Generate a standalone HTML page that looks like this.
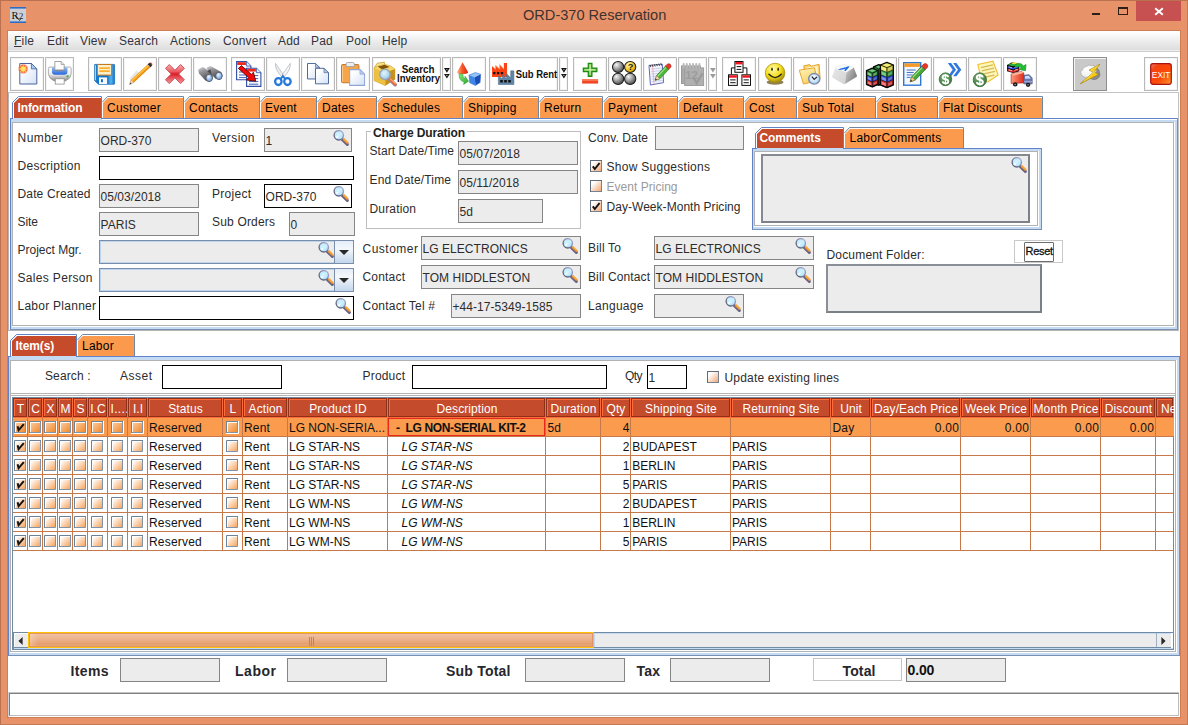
<!DOCTYPE html>
<html><head><meta charset="utf-8"><title>ORD-370 Reservation</title>
<style>
html,body{margin:0;padding:0}
body{width:1188px;height:725px;position:relative;overflow:hidden;background:#e8926a;font-family:"Liberation Sans",sans-serif;font-size:12px;color:#333}
div,svg,span{position:absolute;box-sizing:border-box}
span.i{position:static}
</style></head><body>
<div style="left:0px;top:0px;width:1188px;height:725px;border:1px solid #b9714f;border-right-color:#c47a55;border-bottom-color:#c47a55;"></div>
<div style="left:523px;top:7.27px;font-size:14.6px;line-height:16.6px;color:#3f3330;white-space:nowrap;letter-spacing:-0.015px;">ORD-370 Reservation</div>
<svg style="left:10px;top:7px" width="16" height="16" viewBox="0 0 16 16"><rect width="16" height="16" fill="#ccd0d6"/><rect width="16" height="1.6" fill="#2a6cc6"/><rect y="14.4" width="16" height="1.6" fill="#2a6cc6"/><text x="1.4" y="11.6" font-family="Liberation Serif" font-size="10.5" fill="#151515">R</text><text x="9" y="11.6" font-family="Liberation Serif" font-size="8.6" fill="#151515">2</text><path d="M5.2 8.2 L9.6 13.4 L10.6 12.2" stroke="#151515" stroke-width="0.9" fill="none"/></svg>
<div style="left:1092px;top:13px;width:8px;height:2px;background:#2b2019;"></div>
<div style="left:1118px;top:7px;width:10px;height:8px;border:1px solid #2b2019;border-top-width:2px;"></div>
<div style="left:1136px;top:1px;width:45px;height:20px;background:#c75050;"></div>
<svg style="left:1154px;top:7px" width="10" height="9" viewBox="0 0 10 9"><path d="M1.2 1.3 L8.8 7.8 M8.8 1.3 L1.2 7.8" stroke="#fff" stroke-width="1.9" fill="none"/></svg>
<div style="left:7px;top:30px;width:1174px;height:688px;background:#cf7d55;"></div>
<div style="left:8px;top:31px;width:1172px;height:686px;background:#fff;"></div>
<div style="left:8px;top:31px;width:1172px;height:19px;background:linear-gradient(#ffffff,#fbfbfb 15%,#ececec 55%,#dedede);"></div>
<div style="left:8px;top:50px;width:1172px;height:1px;background:#eeeeee;"></div>
<div style="left:8px;top:51px;width:1172px;height:1px;background:#cdcdcd;"></div>
<div style="left:14px;top:33.53px;font-size:12px;line-height:14px;color:#33333d;white-space:nowrap;letter-spacing:0.2px;"><u>F</u>ile</div>
<div style="left:47px;top:33.53px;font-size:12px;line-height:14px;color:#33333d;white-space:nowrap;letter-spacing:0.2px;">Edit</div>
<div style="left:80px;top:33.53px;font-size:12px;line-height:14px;color:#33333d;white-space:nowrap;letter-spacing:0.2px;">View</div>
<div style="left:119px;top:33.53px;font-size:12px;line-height:14px;color:#33333d;white-space:nowrap;letter-spacing:0.2px;">Search</div>
<div style="left:170px;top:33.53px;font-size:12px;line-height:14px;color:#33333d;white-space:nowrap;letter-spacing:0.2px;">Actions</div>
<div style="left:223px;top:33.53px;font-size:12px;line-height:14px;color:#33333d;white-space:nowrap;letter-spacing:0.2px;">Convert</div>
<div style="left:278px;top:33.53px;font-size:12px;line-height:14px;color:#33333d;white-space:nowrap;letter-spacing:0.2px;">Add</div>
<div style="left:311px;top:33.53px;font-size:12px;line-height:14px;color:#33333d;white-space:nowrap;letter-spacing:0.2px;">Pad</div>
<div style="left:346px;top:33.53px;font-size:12px;line-height:14px;color:#33333d;white-space:nowrap;letter-spacing:0.2px;">Pool</div>
<div style="left:382px;top:33.53px;font-size:12px;line-height:14px;color:#33333d;white-space:nowrap;letter-spacing:0.2px;">Help</div>
<div style="left:8px;top:52px;width:1172px;height:41px;background:#fff;border-bottom:1px solid #c4c4c4;"></div>
<div style="left:10px;top:57px;width:34px;height:34px;background:#fff;border:1px solid #b9b9b9;box-shadow:inset 0 0 0 1px #f4f4f4;"></div>
<svg style="left:17.5px;top:63.1px;overflow:visible" width="19.3" height="21.5" viewBox="0 0 19.30 21.50" preserveAspectRatio="none"><defs><linearGradient id="g1" x1="0" y1="0" x2="1" y2="1"><stop offset="0.2" stop-color="#fff"/><stop offset="1" stop-color="#d3e2f6"/></linearGradient><radialGradient id="g1b"><stop offset="0" stop-color="#fff36a"/><stop offset="0.3" stop-color="#ffc020"/><stop offset="0.62" stop-color="#f6542e"/><stop offset="1" stop-color="#f6542e" stop-opacity="0"/></radialGradient></defs><path d="M1.8 0.5 L13.4 0.5 L18.8 5.9 L18.8 21 L1.8 21 Z" fill="url(#g1)" stroke="#4a6298" stroke-width="1"/><path d="M13.4 0.5 L13.4 5.9 L18.8 5.9 Z" fill="#a9d0f4" stroke="#4a6298" stroke-width="0.8"/><circle cx="5.2" cy="5.9" r="5.4" fill="url(#g1b)"/><path d="M5.2 0.8 L5.9 4.3 L8.8 2.4 L7 5.3 L10.2 6 L7 6.8 L8.6 9.8 L5.9 7.8 L5.1 11 L4.4 7.8 L1.6 9.6 L3.4 6.8 L0.2 5.9 L3.4 5.1 L1.8 2.3 L4.5 4.2 Z" fill="#ffe96a" opacity="0.95"/></svg>
<div style="left:45px;top:57px;width:29px;height:34px;background:#fff;border:1px solid #b9b9b9;box-shadow:inset 0 0 0 1px #f4f4f4;"></div>
<svg style="left:48.2px;top:61.0px;overflow:visible" width="23.6" height="23.6" viewBox="0 0 23.80 23.80" preserveAspectRatio="none"><defs><linearGradient id="g2" x1="0" y1="0" x2="0" y2="1"><stop offset="0" stop-color="#ffffff"/><stop offset="0.5" stop-color="#eeeeee"/><stop offset="1" stop-color="#8a8a8a"/></linearGradient><linearGradient id="g2b" x1="0" y1="0" x2="0" y2="1"><stop offset="0" stop-color="#8cc0fb"/><stop offset="1" stop-color="#2864dc"/></linearGradient></defs><path d="M0.4 7.6 Q0.4 6.1 2 6.1 L21.8 6.1 Q23.4 6.1 23.4 7.6 L23.4 13 Q23.4 17.4 17.4 20.2 L6.4 20.2 Q0.4 17.4 0.4 13 Z" fill="url(#g2)" stroke="#8f8f8f" stroke-width="0.7"/><path d="M4 6.4 L19.6 6.4 L19.6 10.6 Q19.6 13.9 16.5 13.9 L7.1 13.9 Q4 13.9 4 10.6 Z" fill="url(#g2b)"/><rect x="6.6" y="8.6" width="10" height="1.7" fill="#85859a"/><path d="M6.9 0.5 L13.3 0.5 L16.3 3.5 L16.3 9 L6.9 9 Z" fill="#fff" stroke="#8e8e8e" stroke-width="0.8"/><path d="M13.3 0.5 L13.3 3.5 L16.3 3.5" fill="#ececec" stroke="#8e8e8e" stroke-width="0.7"/><circle cx="19.7" cy="15.5" r="1.15" fill="#28b040"/><rect x="7.3" y="17.9" width="9" height="5.4" fill="#fff" stroke="#8e8e8e" stroke-width="0.8"/></svg>
<div style="left:88px;top:57px;width:34px;height:34px;background:#fff;border:1px solid #b9b9b9;box-shadow:inset 0 0 0 1px #f4f4f4;"></div>
<svg style="left:93.9px;top:63.9px;overflow:visible" width="21.0" height="20.7" viewBox="0 0 21.00 20.70" preserveAspectRatio="none"><defs><linearGradient id="g3" x1="0" y1="0" x2="1" y2="0"><stop offset="0" stop-color="#1a7ed0"/><stop offset="0.62" stop-color="#0f6cc4"/><stop offset="0.82" stop-color="#5cb6ee"/><stop offset="0.95" stop-color="#1c84d6"/></linearGradient></defs><path d="M0.5 0.9 Q0.5 0.4 1 0.4 L20 0.4 Q20.6 0.4 20.6 1 L20.6 19.6 Q20.6 20.3 20 20.3 L4.4 20.3 L0.5 16.6 Z" fill="url(#g3)" stroke="#0e62b4" stroke-width="0.7"/><path d="M1.3 1.2 L1.3 16.2" stroke="#cfe8fb" stroke-width="1"/><rect x="3.4" y="0.5" width="14.2" height="10.6" fill="#fdf0c8" stroke="#c07a28" stroke-width="1"/><path d="M5.3 4.1 L15.8 4.1 M5.3 7.2 L15.8 7.2" stroke="#fbb030" stroke-width="1.8"/><rect x="5" y="13.4" width="8.1" height="6.6" fill="#f3f8fd"/><rect x="7" y="15.2" width="1.9" height="3" fill="#1668c8"/></svg>
<div style="left:123px;top:57px;width:34px;height:34px;background:#fff;border:1px solid #b9b9b9;box-shadow:inset 0 0 0 1px #f4f4f4;"></div>
<svg style="left:128.6px;top:62.3px;overflow:visible" width="23.5" height="23.0" viewBox="0 0 23.50 23.00" preserveAspectRatio="none"><path d="M1.6 21.4 L0.8 16.4 L7.4 8.6 L10 10.6 Z" fill="#cfcfcf" opacity="0.5"/><path d="M0.5 22.6 L2 17.8 L4.9 20.6 Z" fill="#f3d3a6" stroke="#b08a5a" stroke-width="0.4"/><path d="M0.5 22.6 L1.2 20.4 L2.6 21.8 Z" fill="#3a3a3a"/><path d="M2 17.8 L18.6 2.4 L21.3 5.2 L4.9 20.6 Z" fill="#f7a21c"/><path d="M2.9 18.6 L19.5 3.3" stroke="#ffd36e" stroke-width="0.9"/><path d="M4.4 20.1 L20.9 4.7" stroke="#d98208" stroke-width="0.8"/><path d="M18.6 2.4 L20 1.1 Q21.6 0.1 22.7 1.3 Q23.7 2.6 22.8 3.9 L21.3 5.2 Z" fill="#2e2e2e"/><path d="M19.6 3.4 L20.4 4.2" stroke="#e8e8e8" stroke-width="0.9"/><path d="M20.7 0.7 Q22.1 0 23 1.2 Q23.6 2.4 23.1 3.5 Q22.3 1.6 20.7 0.7 Z" fill="#f2542c"/></svg>
<div style="left:158px;top:57px;width:34px;height:34px;background:#fff;border:1px solid #b9b9b9;box-shadow:inset 0 0 0 1px #f4f4f4;"></div>
<svg style="left:164.9px;top:63.9px;overflow:visible" width="19.9" height="20.1" viewBox="2.5 2.5 19.00 19.00" preserveAspectRatio="none"><defs><linearGradient id="g4" x1="0" y1="0" x2="0" y2="1"><stop offset="0" stop-color="#f7b0b4"/><stop offset="0.36" stop-color="#ec5c64"/><stop offset="0.5" stop-color="#d81c26"/><stop offset="0.64" stop-color="#e4444c"/><stop offset="1" stop-color="#f29ca2"/></linearGradient></defs><path d="M3 6.6 L6.6 3 L12 8.4 L17.4 3 L21 6.6 L15.6 12 L21 17.4 L17.4 21 L12 15.6 L6.6 21 L3 17.4 L8.4 12 Z" fill="url(#g4)" stroke="#cc4850" stroke-width="0.9" stroke-linejoin="round"/></svg>
<div style="left:193px;top:57px;width:34px;height:34px;background:#fff;border:1px solid #b9b9b9;box-shadow:inset 0 0 0 1px #f4f4f4;"></div>
<svg style="left:197.6px;top:65.9px;overflow:visible" width="24.6" height="15.9" viewBox="0 0 24.60 15.90" preserveAspectRatio="none"><defs><radialGradient id="g5" cx="0.4" cy="0.35"><stop offset="0" stop-color="#eef6ff"/><stop offset="1" stop-color="#7fb0ea"/></radialGradient><linearGradient id="g5b" x1="0" y1="0" x2="0.4" y2="1"><stop offset="0" stop-color="#d0d0d4"/><stop offset="0.4" stop-color="#8e8e92"/><stop offset="1" stop-color="#4a4a4e"/></linearGradient></defs><path d="M8.4 2 L11.6 0.3 Q13 0 14 0.8 L23.2 6 Q24.8 8 24.4 10.6 L22.4 13.4 L17.6 12.8 L10.6 5.6 Z" fill="url(#g5b)"/><path d="M0.4 3.6 L3.8 1.4 Q5 1 6 1.6 L14 8 Q15.2 10 14.8 12.8 L11.4 15.8 L7.4 14.6 L1 7.4 Q0 5.4 0.4 3.6 Z" fill="url(#g5b)"/><path d="M9 5 L13.4 8.6 L12.6 3.4 Z" fill="#4a4a4e"/><path d="M2 3 L5 1.6 M10 1.6 L13 0.6" stroke="#c4c4c8" stroke-width="0.9"/><ellipse cx="11.2" cy="11.9" rx="3.3" ry="3.7" fill="url(#g5)" stroke="#55555a" stroke-width="0.9"/><ellipse cx="20.9" cy="9.9" rx="3.3" ry="3.7" fill="url(#g5)" stroke="#55555a" stroke-width="0.9"/></svg>
<div style="left:231px;top:57px;width:34px;height:34px;background:#fff;border:1px solid #b9b9b9;box-shadow:inset 0 0 0 1px #f4f4f4;"></div>
<svg style="left:235.6px;top:60.9px;overflow:visible" width="25.4" height="25.9" viewBox="0 0 25.40 25.90" preserveAspectRatio="none"><path d="M0.6 0.6 L10.4 0.6 L14.9 5.1 L14.9 18.8 L0.6 18.8 Z" fill="#fff" stroke="#2f4fa8" stroke-width="1.1"/><path d="M10.4 0.6 L10.4 5.1 L14.9 5.1" fill="#e4ecf8" stroke="#2f4fa8" stroke-width="0.8"/><rect x="1.2" y="1.2" width="8.700000000000001" height="2.8" fill="#f02a1a"/><path d="M3.0 8.0 L12.3 8.0 M3.0 11.0 L12.3 11.0 M3.0 14.0 L12.3 14.0 M3.0 16.6 L12.3 16.6" stroke="#3f5fb8" stroke-width="1"/><path d="M10.6 7.2 L20.4 7.2 L24.9 11.7 L24.9 25.4 L10.6 25.4 Z" fill="#fff" stroke="#2f4fa8" stroke-width="1.1"/><path d="M20.4 7.2 L20.4 11.7 L24.9 11.7" fill="#e4ecf8" stroke="#2f4fa8" stroke-width="0.8"/><rect x="11.2" y="7.8" width="8.700000000000001" height="2.8" fill="#f02a1a"/><path d="M13.0 14.600000000000001 L22.299999999999997 14.600000000000001 M13.0 17.6 L22.299999999999997 17.6 M13.0 20.6 L22.299999999999997 20.6 M13.0 23.2 L22.299999999999997 23.2" stroke="#3f5fb8" stroke-width="1"/><path d="M2.4 7.4 L5.4 4.6 L15.4 13.4 L17.4 11.2 L19.8 20.2 L10.4 19 L12.6 16.6 Z" fill="#f00808" stroke="#5a0606" stroke-width="0.9" stroke-linejoin="round"/></svg>
<div style="left:266px;top:57px;width:34px;height:34px;background:#fff;border:1px solid #b9b9b9;box-shadow:inset 0 0 0 1px #f4f4f4;"></div>
<svg style="left:274.3px;top:62.6px;overflow:visible" width="17.8" height="22.5" viewBox="2.6 0.4 18.80 22.80" preserveAspectRatio="none"><path d="M4.2 0.8 Q3.4 7 11 14.6 L12.8 12.6 Q8 6 4.2 0.8 Z" fill="#eceef0" stroke="#a9acb2" stroke-width="0.7"/><path d="M19.8 0.8 Q20.6 7 13 14.6 L11.2 12.6 Q16 6 19.8 0.8 Z" fill="#f6f7f8" stroke="#a9acb2" stroke-width="0.7"/><circle cx="12" cy="13" r="0.9" fill="#8a8a8a"/><ellipse cx="7.2" cy="19.2" rx="3.4" ry="3.5" fill="none" stroke="#2478dc" stroke-width="2.4"/><ellipse cx="16.8" cy="19.2" rx="3.4" ry="3.5" fill="none" stroke="#2478dc" stroke-width="2.4"/><path d="M9.6 16.4 L12 14 L14.4 16.4" fill="none" stroke="#2478dc" stroke-width="2"/></svg>
<div style="left:301px;top:57px;width:34px;height:34px;background:#fff;border:1px solid #b9b9b9;box-shadow:inset 0 0 0 1px #f4f4f4;"></div>
<svg style="left:307.0px;top:63.3px;overflow:visible" width="22.0" height="21.3" viewBox="1 1 22.00 22.00" preserveAspectRatio="none"><defs><linearGradient id="g6" x1="0" y1="0" x2="1" y2="1"><stop offset="0.2" stop-color="#fff"/><stop offset="1" stop-color="#d3e1f5"/></linearGradient></defs><path d="M1.5 1.5 L9.5 1.5 L13.5 5.5 L13.5 17.5 L1.5 17.5 Z" fill="url(#g6)" stroke="#4e679c" stroke-width="1"/><path d="M9.5 1.5 L9.5 5.5 L13.5 5.5 Z" fill="#b9cdea" stroke="#4e679c" stroke-width="0.7"/><path d="M9.5 6.5 L18.0 6.5 L22.5 11.0 L22.5 22.5 L9.5 22.5 Z" fill="url(#g6)" stroke="#4e679c" stroke-width="1"/><path d="M18.0 6.5 L18.0 11.0 L22.5 11.0 Z" fill="#b9cdea" stroke="#4e679c" stroke-width="0.7"/></svg>
<div style="left:336px;top:57px;width:34px;height:34px;background:#fff;border:1px solid #b9b9b9;box-shadow:inset 0 0 0 1px #f4f4f4;"></div>
<svg style="left:341.0px;top:61.9px;overflow:visible" width="24.1" height="23.9" viewBox="1 1 23.50 23.50" preserveAspectRatio="none"><defs><linearGradient id="g7" x1="0" y1="0" x2="1" y2="1"><stop offset="0.2" stop-color="#fff"/><stop offset="1" stop-color="#d3e1f5"/></linearGradient></defs><rect x="1.5" y="3.5" width="17" height="18" rx="1.5" fill="#f5a54a" stroke="#c47a2a"/><path d="M2.5 5 L2.5 20.5" stroke="#fbc98a" stroke-width="1"/><path d="M6 5.5 L6 2.8 Q6 1.5 7.5 1.5 L12.5 1.5 Q14 1.5 14 2.8 L14 5.5 Z" fill="#eceff2" stroke="#9a9ea6" stroke-width="0.8"/><path d="M9.5 8.5 L19.5 8.5 L24.0 13.0 L24.0 24.0 L9.5 24.0 Z" fill="url(#g7)" stroke="#8fa6d8" stroke-width="1"/><path d="M19.5 8.5 L19.5 13.0 L24.0 13.0 Z" fill="#b9cdea" stroke="#8fa6d8" stroke-width="0.7"/></svg>
<div style="left:372px;top:57px;width:69px;height:34px;background:#fff;border:1px solid #b9b9b9;box-shadow:inset 0 0 0 1px #f4f4f4;"></div>
<svg style="left:373.9px;top:62.1px;overflow:visible" width="22.7" height="23.7" viewBox="0 0 22.70 23.70" preserveAspectRatio="none"><defs><radialGradient id="g8" cx="0.42" cy="0.38" r="0.65"><stop offset="0" stop-color="#e2f4fb"/><stop offset="0.6" stop-color="#b4dcf0"/><stop offset="1" stop-color="#8cc2e2"/></radialGradient><linearGradient id="g8b" x1="0" y1="0" x2="1" y2="1"><stop offset="0" stop-color="#f8de7c"/><stop offset="1" stop-color="#d8a428"/></linearGradient></defs><path d="M0.2 5.9 L3.2 1.4 L10.2 0.2 L10.8 2.4 L16.3 3.8 L20.9 7 L20.9 17.2 L11.3 23.5 L0.2 18.7 Z" fill="url(#g8b)" stroke="#b8861c" stroke-width="0.5"/><path d="M11.3 10.6 L20.9 7 L20.9 17.2 L11.3 23.5 Z" fill="#c8921a"/><path d="M0.2 5.9 L11.3 10.6 L11.3 23.5 L0.2 18.7 Z" fill="#ecc040"/><path d="M3 4.2 L11 2.2 L16.2 4.2 L20.9 7 L11.3 10.6 L0.2 5.9 Z" fill="#f6d868"/><path d="M3.6 4.6 L10.8 2.8 L15.6 5 L8.2 7.4 Z" fill="#80540c"/><path d="M0.2 5.9 L3.2 1.4 L10.2 0.2 L10.8 2.4 L3.4 4.2 Z" fill="#fae690" stroke="#c8961c" stroke-width="0.5"/><path d="M14.8 16.6 L21.2 22.8" stroke="#9a8aa0" stroke-width="3.6" stroke-linecap="round"/><path d="M15.2 16.4 L21.4 22.4" stroke="#f4642c" stroke-width="2.4" stroke-linecap="round"/><path d="M15.8 16.4 L21.6 21.8" stroke="#fbd8a0" stroke-width="0.9"/><circle cx="11" cy="12.4" r="5.2" fill="url(#g8)" stroke="#9aa2b2" stroke-width="1.3"/></svg><svg style="left:396px;top:58px" width="46" height="32"><text x="5.7" y="14.7" font-family="Liberation Sans" font-weight="bold" font-size="10.5" fill="#111" textLength="32.8" lengthAdjust="spacingAndGlyphs">Search</text><text x="1.1" y="23.8" font-family="Liberation Sans" font-weight="bold" font-size="10.5" fill="#111" textLength="42.9" lengthAdjust="spacingAndGlyphs">Inventory</text></svg>
<div style="left:442px;top:57px;width:9px;height:34px;background:#fff;border:1px solid #b9b9b9;box-shadow:inset 0 0 0 1px #f4f4f4;"></div>
<svg style="left:444.1px;top:68.1px;overflow:visible" width="5.8" height="10.6" viewBox="0 0 7.00 11.50" preserveAspectRatio="none"><path d="M0 0 L7 0 L3.5 5.2 Z" fill="#111"/><path d="M0 6.4 L7 6.4 L3.5 11.5 Z" fill="#111"/><circle cx="3.5" cy="1.7" r="0.75" fill="#c8c8c8"/><circle cx="3.5" cy="8.1" r="0.75" fill="#c8c8c8"/></svg>
<div style="left:452px;top:57px;width:34px;height:34px;background:#fff;border:1px solid #b9b9b9;box-shadow:inset 0 0 0 1px #f4f4f4;"></div>
<svg style="left:456.9px;top:62.1px;overflow:visible" width="23.9" height="23.7" viewBox="0 0 24.40 23.90" preserveAspectRatio="none"><defs><linearGradient id="g9" x1="0" y1="0" x2="1" y2="0"><stop offset="0" stop-color="#ffb488"/><stop offset="0.45" stop-color="#fa5a2a"/><stop offset="1" stop-color="#d8220e"/></linearGradient><linearGradient id="g9g" x1="0" y1="0" x2="1" y2="1"><stop offset="0" stop-color="#8ae87a"/><stop offset="1" stop-color="#28a82e"/></linearGradient></defs><path d="M5.7 0.2 L11.4 10.4 Q11.2 12.2 5.7 12.2 Q0.2 12.2 0 10.4 Z" fill="url(#g9)"/><path d="M2 11.6 L6.2 12.6 Q5.6 16 8 16.8 L8.2 14.4 L11.8 19.4 L6.8 22.6 L7.2 20 Q2 19.4 2 11.6 Z" fill="url(#g9g)" stroke="#23922c" stroke-width="0.5"/><path d="M12.3 13.2 L18.8 10.6 L24.2 12.4 L18.2 15.4 Z" fill="#92c4fa"/><path d="M12.3 13.2 L18.2 15.4 L18.8 23.7 L13 21 Z" fill="#3f86e6"/><path d="M18.2 15.4 L24.2 12.4 L23.6 20.8 L18.8 23.7 Z" fill="#1b4fb8"/><path d="M12.3 13.2 L18.8 10.6 L24.2 12.4 L23.6 20.8 L18.8 23.7 L13 21 Z" fill="none" stroke="#2a62c8" stroke-width="0.5"/></svg>
<div style="left:489px;top:57px;width:69px;height:34px;background:#fff;border:1px solid #b9b9b9;box-shadow:inset 0 0 0 1px #f4f4f4;"></div>
<svg style="left:491.9px;top:63.1px;overflow:visible" width="21.9" height="21.5" viewBox="1 1 24.00 26.00" preserveAspectRatio="none"><path d="M1 18 L1 5 L5 8.5 L5 4 L9.5 8.5 L9.5 3 L14 8.5 L14 1 L17.5 1 L17.5 18 Z" fill="#fb4414"/><path d="M1 5 L5 8.5 L5 4 L9.5 8.5 L9.5 3 L14 8.5" fill="none" stroke="#ff8a5a" stroke-width="0.8"/><path d="M2.2 11.8 h2.6 v2.8 h-2.6z M6.4 11.8 h2.6 v2.8 h-2.6z M10.6 11.8 h2.6 v2.8 h-2.6z" fill="#151515"/><path d="M8 27 L8 17 L12.5 20 L12.5 15.5 L17 20 L17 14 L21.5 19 L21.5 10.5 L25 10.5 L25 27 Z" fill="#5f86a6" stroke="#466a88" stroke-width="0.6"/><path d="M10 21.6 h2.8 v3 h-2.8z M14.4 21.6 h2.8 v3 h-2.8z M18.8 21.6 h2.8 v3 h-2.8z" fill="#111"/></svg><svg style="left:514px;top:58px" width="46" height="32"><text x="1.7" y="19.7" font-family="Liberation Sans" font-weight="bold" font-size="10.5" fill="#111" textLength="41.6" lengthAdjust="spacingAndGlyphs">Sub Rent</text></svg>
<div style="left:559px;top:57px;width:9px;height:34px;background:#fff;border:1px solid #b9b9b9;box-shadow:inset 0 0 0 1px #f4f4f4;"></div>
<svg style="left:561.1px;top:68.1px;overflow:visible" width="5.8" height="10.6" viewBox="0 0 7.00 11.50" preserveAspectRatio="none"><path d="M0 0 L7 0 L3.5 5.2 Z" fill="#111"/><path d="M0 6.4 L7 6.4 L3.5 11.5 Z" fill="#111"/><circle cx="3.5" cy="1.7" r="0.75" fill="#c8c8c8"/><circle cx="3.5" cy="8.1" r="0.75" fill="#c8c8c8"/></svg>
<div style="left:573px;top:57px;width:34px;height:34px;background:#fff;border:1px solid #b9b9b9;box-shadow:inset 0 0 0 1px #f4f4f4;"></div>
<svg style="left:581.9px;top:63.1px;overflow:visible" width="16.2" height="20.7" viewBox="3.5 1 16.00 21.00" preserveAspectRatio="none"><defs><linearGradient id="g10" x1="0" y1="0" x2="0" y2="1"><stop offset="0" stop-color="#7ccc50"/><stop offset="1" stop-color="#3ea01e"/></linearGradient></defs><path d="M9.7 1.4 L13.3 1.4 L13.3 6.2 L18.2 6.2 L18.2 9.8 L13.3 9.8 L13.3 14.6 L9.7 14.6 L9.7 9.8 L4.8 9.8 L4.8 6.2 L9.7 6.2 Z" fill="url(#g10)" stroke="#1f8a10" stroke-width="1.2"/><path d="M11.5 2.6 L11.5 13.4 M6 8 L17 8" stroke="#d4f4b8" stroke-width="1.2"/><rect x="3.6" y="17.6" width="15.8" height="4.3" fill="#f04824" /><rect x="3.6" y="17.6" width="15.8" height="1.6" fill="#f87858"/></svg>
<div style="left:608px;top:57px;width:34px;height:34px;background:#fff;border:1px solid #b9b9b9;box-shadow:inset 0 0 0 1px #f4f4f4;"></div>
<svg style="left:611.9px;top:60.9px;overflow:visible" width="24.3" height="23.9" viewBox="0.5 0.5 25.00 25.00" preserveAspectRatio="none"><defs><radialGradient id="g11" cx="0.35" cy="0.3" r="0.8"><stop offset="0" stop-color="#f4f4f4"/><stop offset="0.5" stop-color="#9a9a9a"/><stop offset="1" stop-color="#3a3a3a"/></radialGradient><radialGradient id="g11y" cx="0.35" cy="0.3" r="0.8"><stop offset="0" stop-color="#fff6b0"/><stop offset="0.6" stop-color="#f2c21a"/><stop offset="1" stop-color="#b88a08"/></radialGradient></defs><circle cx="6.8" cy="6.8" r="5.8" fill="url(#g11)" stroke="#1e1e1e" stroke-width="1.1"/><circle cx="19.2" cy="6.8" r="5.8" fill="url(#g11y)" stroke="#1e1e1e" stroke-width="1.1"/><circle cx="6.8" cy="19.2" r="5.8" fill="url(#g11)" stroke="#1e1e1e" stroke-width="1.1"/><circle cx="19.2" cy="19.2" r="5.8" fill="url(#g11)" stroke="#1e1e1e" stroke-width="1.1"/><text x="16.6" y="10.4" font-family="Liberation Sans" font-weight="bold" font-size="9.5" fill="#222">?</text></svg>
<div style="left:643px;top:57px;width:34px;height:34px;background:#fff;border:1px solid #b9b9b9;box-shadow:inset 0 0 0 1px #f4f4f4;"></div>
<svg style="left:648.8px;top:62.6px;overflow:visible" width="22.2" height="22.0" viewBox="3 1.4 23.50 23.10" preserveAspectRatio="none"><path d="M3 4 L17 2.5 L18.5 22 L4.5 24.5 Z" fill="#f4f6fd" stroke="#5a62b8" stroke-width="1"/><path d="M5 8 L16.6 6.6 M5.2 10.6 L16.8 9.2 M5.4 13.2 L17 11.8 M5.6 15.8 L17.2 14.4 M5.8 18.4 L17.4 17 M6 21 L17.6 19.6" stroke="#b9c3ee" stroke-width="0.8"/><path d="M6.8 4.4 L8.4 23.4" stroke="#f0a0a0" stroke-width="0.8"/><path d="M4 3.4 L5 5.6 M6.3 3.1 L7.3 5.3 M8.6 2.8 L9.6 5 M10.9 2.5 L11.9 4.7 M13.2 2.2 L14.2 4.4 M15.5 1.9 L16.5 4.1" stroke="#333" stroke-width="1"/><path d="M9.5 19.5 L11 14.6 L20.5 4.6 L24 8 L14.4 18 Z" fill="#49b83a" stroke="#2a7a22" stroke-width="0.8"/><path d="M12 15.5 L21 6" stroke="#a2e48a" stroke-width="1.2"/><path d="M9.5 19.5 L11 14.6 L14.4 18 Z" fill="#f3d9b0" stroke="#8a6a3a" stroke-width="0.5"/><path d="M9.5 19.5 L10.1 17.6 L11.4 18.9 Z" fill="#222"/><path d="M20.5 4.6 L22.4 2.6 Q24.4 1.4 25.8 3 Q27 4.6 25.9 6.2 L24 8 Z" fill="#e8382a" stroke="#a01a12" stroke-width="0.6"/></svg>
<div style="left:678px;top:57px;width:29px;height:34px;background:#fff;border:1px solid #b9b9b9;box-shadow:inset 0 0 0 1px #f4f4f4;"></div>
<svg style="left:681.0px;top:62.6px;overflow:visible" width="23.1" height="23.0" viewBox="1 1.5 22.00 23.50" preserveAspectRatio="none"><rect x="1.5" y="4.5" width="18" height="18" fill="#aaaaaa" stroke="#9a9a9a"/><rect x="4.5" y="6.5" width="18" height="18" fill="#b0b0b0" stroke="#9e9e9e"/><path d="M3.5 2.5 v4 M6.5 2.5 v4 M9.5 2.5 v4 M12.5 2.5 v4 M15.5 2.5 v4 M18.5 2.5 v4" stroke="#b8b8b8" stroke-width="1.8" stroke-linecap="round"/><text x="5" y="18" font-family="Liberation Sans" font-weight="bold" font-size="11" fill="#9c9c9c">12</text><path d="M13 17 L16 22 L21.5 12" fill="none" stroke="#9a9a9a" stroke-width="2.2"/></svg>
<div style="left:708px;top:57px;width:9px;height:34px;background:#fff;border:1px solid #b9b9b9;box-shadow:inset 0 0 0 1px #f4f4f4;"></div>
<svg style="left:710.1px;top:68.1px;overflow:visible" width="5.8" height="10.6" viewBox="0 0 7.00 11.50" preserveAspectRatio="none"><path d="M0 0 L7 0 L3.5 5 Z" fill="#9c9c9c"/><path d="M0 6.5 L7 6.5 L3.5 11.5 Z" fill="#9c9c9c"/></svg>
<div style="left:722px;top:57px;width:34px;height:34px;background:#fff;border:1px solid #b9b9b9;box-shadow:inset 0 0 0 1px #f4f4f4;"></div>
<svg style="left:728.0px;top:60.9px;overflow:visible" width="23.0" height="24.9" viewBox="0 0 23.00 24.90" preserveAspectRatio="none"><path d="M3.4 13.4 L3.4 6.9 L18.9 6.9 L18.9 13.4" fill="none" stroke="#111" stroke-width="1"/><rect x="6.9" y="0.5" width="8.1" height="10.8" fill="#fff" stroke="#111" stroke-width="1"/><rect x="7.4" y="1" width="7.1" height="2.4" fill="#f0141e"/><path d="M8.600000000000001 5.6 h4.699999999999999 M8.600000000000001 8.4 h4.699999999999999" stroke="#111" stroke-width="1"/><rect x="0.5" y="13.8" width="8.8" height="10.6" fill="#fff" stroke="#111" stroke-width="1"/><rect x="1" y="14.3" width="7.800000000000001" height="2.4" fill="#f0141e"/><path d="M2.2 18.9 h5.4 M2.2 21.700000000000003 h5.4" stroke="#111" stroke-width="1"/><rect x="13.9" y="13.8" width="8.6" height="10.6" fill="#fff" stroke="#111" stroke-width="1"/><rect x="14.4" y="14.3" width="7.6" height="2.4" fill="#f0141e"/><path d="M15.600000000000001 18.9 h5.199999999999999 M15.600000000000001 21.700000000000003 h5.199999999999999" stroke="#111" stroke-width="1"/></svg>
<div style="left:758px;top:57px;width:34px;height:34px;background:#fff;border:1px solid #b9b9b9;box-shadow:inset 0 0 0 1px #f4f4f4;"></div>
<svg style="left:764.9px;top:62.6px;overflow:visible" width="20.2" height="21.7" viewBox="1.5 1 21.00 23.00" preserveAspectRatio="none"><defs><radialGradient id="g12" cx="0.4" cy="0.3" r="0.8"><stop offset="0" stop-color="#fffcae"/><stop offset="0.5" stop-color="#f4de1c"/><stop offset="1" stop-color="#8c7206"/></radialGradient></defs><ellipse cx="12" cy="21.4" rx="8.8" ry="2.6" fill="#5c4a08" opacity="0.7"/><circle cx="12" cy="11.5" r="10.2" fill="url(#g12)" stroke="#a88c10" stroke-width="0.8"/><ellipse cx="8.8" cy="7.6" rx="0.9" ry="1.8" fill="#3a3208"/><ellipse cx="15.2" cy="7.6" rx="0.9" ry="1.8" fill="#3a3208"/><path d="M5.6 13 Q12 20 18.4 13" fill="none" stroke="#222" stroke-width="1.5" stroke-linecap="round"/></svg>
<div style="left:793px;top:57px;width:34px;height:34px;background:#fff;border:1px solid #b9b9b9;box-shadow:inset 0 0 0 1px #f4f4f4;"></div>
<svg style="left:798.9px;top:63.6px;overflow:visible" width="21.9" height="21.2" viewBox="1.5 3 22.30 22.80" preserveAspectRatio="none"><defs><radialGradient id="g13" cx="0.45" cy="0.4"><stop offset="0" stop-color="#ffffff"/><stop offset="1" stop-color="#b4d8f8"/></radialGradient><linearGradient id="g13f" x1="0" y1="0" x2="0.6" y2="1"><stop offset="0" stop-color="#fff6c4"/><stop offset="1" stop-color="#f8cf5a"/></linearGradient></defs><path d="M6.4 5 L12.4 3.6 L13.8 5.4 L22 3.4 L23 18.4 L8 21 Z" fill="#f9d56a" stroke="#e39a1e" stroke-width="0.9"/><path d="M8.4 7 L20.4 5 L21 18 L9.6 20 Z" fill="#fffbe6" opacity="0.8"/><path d="M1.8 9.6 L17.2 7 L20.4 21 L6 24.6 Z" fill="url(#g13f)" stroke="#e39a1e" stroke-width="0.9"/><circle cx="17" cy="19" r="5.7" fill="url(#g13)" stroke="#7e8aa6" stroke-width="1.5"/><path d="M14.6 16.6 L17 19.6 L19.8 16.8" fill="none" stroke="#20242e" stroke-width="1.3"/></svg>
<div style="left:828px;top:57px;width:34px;height:34px;background:#fff;border:1px solid #b9b9b9;box-shadow:inset 0 0 0 1px #f4f4f4;"></div>
<svg style="left:832.4px;top:63.6px;overflow:visible" width="25.1" height="20.2" viewBox="0 0 25.20 20.40" preserveAspectRatio="none"><defs><linearGradient id="g14" x1="0" y1="0" x2="1" y2="0.6"><stop offset="0" stop-color="#d0d0d0"/><stop offset="1" stop-color="#7c7c7c"/></linearGradient><linearGradient id="g14b" x1="0" y1="0" x2="1" y2="1"><stop offset="0" stop-color="#e8e8e8"/><stop offset="1" stop-color="#d2d2d2"/></linearGradient></defs><path d="M3.1 4.2 L14.4 8.4 L13 20.2 Q12 20.6 11 20 L0.6 14 Q-0.2 13.2 0.2 12.4 Z" fill="url(#g14b)"/><path d="M14.4 8.4 L21.9 3.5 L25 11.6 Q25.2 12.6 24.4 13.2 L13 20.2 Z" fill="url(#g14)"/><path d="M3.1 4.2 Q3.4 3.4 4.4 3 L11 0.5 Q11.8 0.2 12.8 0.5 L21.2 3 Q22 3.2 21.9 3.5 L14.8 8.2 Q14.2 8.6 13.4 8.2 Z" fill="#fafafa" stroke="#e0e0e0" stroke-width="0.4"/><path d="M6.2 5.2 L14.2 3 L16.6 2.2 L17.6 2.8 L13.6 7.2 L12.2 6.6 L13.4 5 L8 6 Z" fill="#1f6ee8"/><path d="M12.6 4.1 L14.2 3.7 L13.8 4.4 Z" fill="#fafafa"/></svg>
<div style="left:863px;top:57px;width:34px;height:34px;background:#fff;border:1px solid #b9b9b9;box-shadow:inset 0 0 0 1px #f4f4f4;"></div>
<svg style="left:866.3px;top:61.9px;overflow:visible" width="27.7" height="23.7" viewBox="0 0 27.70 23.70" preserveAspectRatio="none"><path d="M7.6 4.800000000000001 L12.8 7.000000000000001 L12.8 12.400000000000002 L7.6 10.200000000000001 Z" fill="#2aa23a"/><path d="M12.8 7.000000000000001 L18.0 4.800000000000001 L18.0 10.200000000000001 L12.8 12.400000000000002 Z" fill="#2aa23a"/><path d="M12.8 7.000000000000001 L18.0 4.800000000000001 L18.0 10.200000000000001 L12.8 12.400000000000002 Z" fill="#000" opacity="0.18"/><path d="M8.799999999999999 6.4 L11.8 7.900000000000001 L11.8 11.000000000000002 L8.799999999999999 9.4 Z" fill="#fff" opacity="0.42"/><path d="M14.0 7.800000000000001 L16.6 6.300000000000001 L16.6 9.200000000000001 L14.0 10.800000000000002 Z" fill="#fff" opacity="0.28"/><path d="M7.6 10.200000000000001 L12.8 12.400000000000002 L18.0 10.200000000000001" fill="none" stroke="#0a0a0a" stroke-width="0.9"/><path d="M7.6 10.200000000000001 L12.8 12.400000000000002 L12.8 17.8 L7.6 15.600000000000001 Z" fill="#2c48e0"/><path d="M12.8 12.400000000000002 L18.0 10.200000000000001 L18.0 15.600000000000001 L12.8 17.8 Z" fill="#2c48e0"/><path d="M12.8 12.400000000000002 L18.0 10.200000000000001 L18.0 15.600000000000001 L12.8 17.8 Z" fill="#000" opacity="0.18"/><path d="M8.799999999999999 11.8 L11.8 13.300000000000002 L11.8 16.400000000000002 L8.799999999999999 14.8 Z" fill="#fff" opacity="0.42"/><path d="M14.0 13.200000000000003 L16.6 11.700000000000001 L16.6 14.600000000000001 L14.0 16.2 Z" fill="#fff" opacity="0.28"/><path d="M7.6 15.600000000000001 L12.8 17.8 L18.0 15.600000000000001" fill="none" stroke="#0a0a0a" stroke-width="0.9"/><path d="M7.6 15.600000000000001 L12.8 17.8 L12.8 23.2 L7.6 21.0 Z" fill="#e02828"/><path d="M12.8 17.8 L18.0 15.600000000000001 L18.0 21.0 L12.8 23.2 Z" fill="#e02828"/><path d="M12.8 17.8 L18.0 15.600000000000001 L18.0 21.0 L12.8 23.2 Z" fill="#000" opacity="0.18"/><path d="M8.799999999999999 17.200000000000003 L11.8 18.7 L11.8 21.8 L8.799999999999999 20.2 Z" fill="#fff" opacity="0.42"/><path d="M14.0 18.6 L16.6 17.1 L16.6 20.0 L14.0 21.599999999999998 Z" fill="#fff" opacity="0.28"/><path d="M7.6 21.0 L12.8 23.2 L18.0 21.0" fill="none" stroke="#0a0a0a" stroke-width="0.9"/><path d="M7.6 4.800000000000001 L12.8 2.6 L18.0 4.800000000000001 L12.8 7.0 Z" fill="#2aa23a"/><path d="M9.2 4.800000000000001 L12.8 3.6 L16.4 4.800000000000001 L12.8 6.0 Z" fill="#fff" opacity="0.35"/><path d="M7.6 4.800000000000001 L12.8 2.6 L18.0 4.800000000000001 L18.0 21.000000000000004 L12.8 23.200000000000003 L7.6 21.000000000000004 Z" fill="none" stroke="#0a0a0a" stroke-width="1.3" stroke-linejoin="round"/><path d="M7.6 4.800000000000001 L12.8 7.0 L18.0 4.800000000000001 M12.8 7.0 L12.8 23.200000000000003" fill="none" stroke="#0a0a0a" stroke-width="0.8"/><path d="M14.4 3.0 L20.9 5.6 L20.9 10.6 L14.4 8.0 Z" fill="#ece43c"/><path d="M20.9 5.6 L27.4 3.0 L27.4 8.0 L20.9 10.6 Z" fill="#ece43c"/><path d="M20.9 5.6 L27.4 3.0 L27.4 8.0 L20.9 10.6 Z" fill="#000" opacity="0.18"/><path d="M15.6 4.6 L19.9 6.5 L19.9 9.2 L15.6 7.2 Z" fill="#fff" opacity="0.42"/><path d="M22.099999999999998 6.3999999999999995 L26.0 4.5 L26.0 7.0 L22.099999999999998 9.0 Z" fill="#fff" opacity="0.28"/><path d="M14.4 8.0 L20.9 10.6 L27.4 8.0" fill="none" stroke="#0a0a0a" stroke-width="0.9"/><path d="M14.4 8.0 L20.9 10.6 L20.9 15.6 L14.4 13.0 Z" fill="#2aa23a"/><path d="M20.9 10.6 L27.4 8.0 L27.4 13.0 L20.9 15.6 Z" fill="#2aa23a"/><path d="M20.9 10.6 L27.4 8.0 L27.4 13.0 L20.9 15.6 Z" fill="#000" opacity="0.18"/><path d="M15.6 9.6 L19.9 11.5 L19.9 14.2 L15.6 12.2 Z" fill="#fff" opacity="0.42"/><path d="M22.099999999999998 11.4 L26.0 9.5 L26.0 12.0 L22.099999999999998 14.0 Z" fill="#fff" opacity="0.28"/><path d="M14.4 13.0 L20.9 15.6 L27.4 13.0" fill="none" stroke="#0a0a0a" stroke-width="0.9"/><path d="M14.4 13.0 L20.9 15.6 L20.9 20.6 L14.4 18.0 Z" fill="#2c48e0"/><path d="M20.9 15.6 L27.4 13.0 L27.4 18.0 L20.9 20.6 Z" fill="#2c48e0"/><path d="M20.9 15.6 L27.4 13.0 L27.4 18.0 L20.9 20.6 Z" fill="#000" opacity="0.18"/><path d="M15.6 14.6 L19.9 16.5 L19.9 19.200000000000003 L15.6 17.2 Z" fill="#fff" opacity="0.42"/><path d="M22.099999999999998 16.4 L26.0 14.5 L26.0 17.0 L22.099999999999998 19.0 Z" fill="#fff" opacity="0.28"/><path d="M14.4 18.0 L20.9 20.6 L27.4 18.0" fill="none" stroke="#0a0a0a" stroke-width="0.9"/><path d="M14.4 18.0 L20.9 20.6 L20.9 25.6 L14.4 23.0 Z" fill="#e02828"/><path d="M20.9 20.6 L27.4 18.0 L27.4 23.0 L20.9 25.6 Z" fill="#e02828"/><path d="M20.9 20.6 L27.4 18.0 L27.4 23.0 L20.9 25.6 Z" fill="#000" opacity="0.18"/><path d="M15.6 19.6 L19.9 21.5 L19.9 24.200000000000003 L15.6 22.2 Z" fill="#fff" opacity="0.42"/><path d="M22.099999999999998 21.400000000000002 L26.0 19.5 L26.0 22.0 L22.099999999999998 24.0 Z" fill="#fff" opacity="0.28"/><path d="M14.4 23.0 L20.9 25.6 L27.4 23.0" fill="none" stroke="#0a0a0a" stroke-width="0.9"/><path d="M14.4 3.0 L20.9 0.4 L27.4 3.0 L20.9 5.6000000000000005 Z" fill="#ece43c"/><path d="M16.0 3.0 L20.9 1.4 L25.799999999999997 3.0 L20.9 4.6000000000000005 Z" fill="#fff" opacity="0.35"/><path d="M14.4 3.0 L20.9 0.4 L27.4 3.0 L27.4 23.0 L20.9 25.6 L14.4 23.0 Z" fill="none" stroke="#0a0a0a" stroke-width="1.3" stroke-linejoin="round"/><path d="M14.4 3.0 L20.9 5.6000000000000005 L27.4 3.0 M20.9 5.6000000000000005 L20.9 25.6" fill="none" stroke="#0a0a0a" stroke-width="0.8"/><path d="M0.5 8.6 L6.3 11.0 L6.3 15.6 L0.5 13.2 Z" fill="#2aa23a"/><path d="M6.3 11.0 L12.1 8.6 L12.1 13.2 L6.3 15.6 Z" fill="#2aa23a"/><path d="M6.3 11.0 L12.1 8.6 L12.1 13.2 L6.3 15.6 Z" fill="#000" opacity="0.18"/><path d="M1.7 10.2 L5.3 11.9 L5.3 14.2 L1.7 12.399999999999999 Z" fill="#fff" opacity="0.42"/><path d="M7.5 11.8 L10.7 10.1 L10.7 12.2 L7.5 14.0 Z" fill="#fff" opacity="0.28"/><path d="M0.5 13.2 L6.3 15.6 L12.1 13.2" fill="none" stroke="#0a0a0a" stroke-width="0.9"/><path d="M0.5 13.2 L6.3 15.6 L6.3 20.199999999999996 L0.5 17.799999999999997 Z" fill="#2c48e0"/><path d="M6.3 15.6 L12.1 13.2 L12.1 17.799999999999997 L6.3 20.199999999999996 Z" fill="#2c48e0"/><path d="M6.3 15.6 L12.1 13.2 L12.1 17.799999999999997 L6.3 20.199999999999996 Z" fill="#000" opacity="0.18"/><path d="M1.7 14.799999999999999 L5.3 16.5 L5.3 18.799999999999997 L1.7 16.999999999999996 Z" fill="#fff" opacity="0.42"/><path d="M7.5 16.4 L10.7 14.7 L10.7 16.799999999999997 L7.5 18.599999999999994 Z" fill="#fff" opacity="0.28"/><path d="M0.5 17.799999999999997 L6.3 20.199999999999996 L12.1 17.799999999999997" fill="none" stroke="#0a0a0a" stroke-width="0.9"/><path d="M0.5 17.799999999999997 L6.3 20.199999999999996 L6.3 24.799999999999997 L0.5 22.4 Z" fill="#e02828"/><path d="M6.3 20.199999999999996 L12.1 17.799999999999997 L12.1 22.4 L6.3 24.799999999999997 Z" fill="#e02828"/><path d="M6.3 20.199999999999996 L12.1 17.799999999999997 L12.1 22.4 L6.3 24.799999999999997 Z" fill="#000" opacity="0.18"/><path d="M1.7 19.4 L5.3 21.099999999999994 L5.3 23.4 L1.7 21.599999999999998 Z" fill="#fff" opacity="0.42"/><path d="M7.5 20.999999999999996 L10.7 19.299999999999997 L10.7 21.4 L7.5 23.199999999999996 Z" fill="#fff" opacity="0.28"/><path d="M0.5 22.4 L6.3 24.799999999999997 L12.1 22.4" fill="none" stroke="#0a0a0a" stroke-width="0.9"/><path d="M0.5 8.6 L6.3 6.2 L12.1 8.6 L6.3 11.0 Z" fill="#2aa23a"/><path d="M2.1 8.6 L6.3 7.2 L10.5 8.6 L6.3 10.0 Z" fill="#fff" opacity="0.35"/><path d="M0.5 8.6 L6.3 6.2 L12.1 8.6 L12.1 22.4 L6.3 24.799999999999997 L0.5 22.4 Z" fill="none" stroke="#0a0a0a" stroke-width="1.3" stroke-linejoin="round"/><path d="M0.5 8.6 L6.3 11.0 L12.1 8.6 M6.3 11.0 L6.3 24.799999999999997" fill="none" stroke="#0a0a0a" stroke-width="0.8"/></svg>
<div style="left:898px;top:57px;width:34px;height:34px;background:#fff;border:1px solid #b9b9b9;box-shadow:inset 0 0 0 1px #f4f4f4;"></div>
<svg style="left:902.9px;top:61.9px;overflow:visible" width="25.2" height="23.9" viewBox="1.3 1.3 25.20 24.40" preserveAspectRatio="none"><rect x="2" y="2" width="17" height="23" fill="#f4f8fe" stroke="#2f78d0" stroke-width="1.4"/><rect x="2.7" y="2.7" width="15.6" height="3.6" fill="#f59a2a"/><path d="M5 9.5 h9 M5 12 h7 M5 14.5 h6 M5 17 h4" stroke="#3f6fc0" stroke-width="1"/><path d="M8.5 21.5 L10 16.4 L20 5.6 L23.6 9 L13.5 19.8 Z" fill="#4aa83a" stroke="#2a6a22" stroke-width="0.8"/><path d="M11 17 L20.6 6.8" stroke="#a2e48a" stroke-width="1.1"/><path d="M8.5 21.5 L10 16.4 L13.5 19.8 Z" fill="#f1c98a" stroke="#8a6a3a" stroke-width="0.5"/><path d="M8.5 21.5 L9.2 19.4 L10.6 20.8 Z" fill="#222"/><path d="M20 5.6 L22 3.4 Q24 2.2 25.5 3.8 Q26.8 5.4 25.6 7 L23.6 9 Z" fill="#e8382a" stroke="#a01a12" stroke-width="0.6"/></svg>
<div style="left:933px;top:57px;width:34px;height:34px;background:#fff;border:1px solid #b9b9b9;box-shadow:inset 0 0 0 1px #f4f4f4;"></div>
<svg style="left:938.9px;top:62.9px;overflow:visible" width="22.3" height="22.9" viewBox="1 2 22.80 22.80" preserveAspectRatio="none"><path d="M10 2 L13.4 2 L18.4 8.6 L13.4 15.2 L10 15.2 L15 8.6 Z" fill="#2f78e0"/><path d="M15.4 2 L18.8 2 L23.8 8.6 L18.8 15.2 L15.4 15.2 L20.4 8.6 Z" fill="#2f78e0"/><defs><radialGradient id="g15" cx="0.4" cy="0.3" r="0.8"><stop offset="0" stop-color="#86b486"/><stop offset="0.6" stop-color="#4c884c"/><stop offset="1" stop-color="#386e38"/></radialGradient></defs><circle cx="7.6" cy="18.2" r="6.4" fill="url(#g15)" stroke="#3a703a" stroke-width="0.8"/><path d="M10.3 16.099999999999998 Q10.1 14.1 7.6 14.1 Q4.699999999999999 14.1 4.699999999999999 16.099999999999998 Q4.699999999999999 17.7 7.6 18.2 Q10.5 18.7 10.5 20.4 Q10.5 22.299999999999997 7.6 22.299999999999997 Q4.8999999999999995 22.299999999999997 4.699999999999999 20.4" fill="none" stroke="#fff" stroke-width="1.9" stroke-linecap="butt"/><path d="M7.6 12.899999999999999 L7.6 23.5" stroke="#fff" stroke-width="1.3"/></svg>
<div style="left:968px;top:57px;width:34px;height:34px;background:#fff;border:1px solid #b9b9b9;box-shadow:inset 0 0 0 1px #f4f4f4;"></div>
<svg style="left:972.8px;top:60.9px;overflow:visible" width="25.2" height="25.9" viewBox="0.8 1 24.20 24.00" preserveAspectRatio="none"><path d="M5.4 4.2 L20 1.2 L25 14 L15 20.4 L9 19 Z" fill="#fdf7b6" stroke="#f2bc2a" stroke-width="1"/><path d="M8.4 7.2 L20 4.6 M9.2 10.2 L21 7.6 M10 13.2 L22 10.6 M10.8 16.2 L21.4 14" stroke="#d6b85e" stroke-width="1.2"/><defs><radialGradient id="g16" cx="0.4" cy="0.3" r="0.8"><stop offset="0" stop-color="#86b486"/><stop offset="0.6" stop-color="#4c884c"/><stop offset="1" stop-color="#386e38"/></radialGradient></defs><circle cx="7.4" cy="18.4" r="6.4" fill="url(#g16)" stroke="#3a703a" stroke-width="0.8"/><path d="M10.100000000000001 16.299999999999997 Q9.9 14.299999999999999 7.4 14.299999999999999 Q4.5 14.299999999999999 4.5 16.299999999999997 Q4.5 17.9 7.4 18.4 Q10.3 18.9 10.3 20.599999999999998 Q10.3 22.5 7.4 22.5 Q4.7 22.5 4.5 20.599999999999998" fill="none" stroke="#fff" stroke-width="1.9" stroke-linecap="butt"/><path d="M7.4 13.099999999999998 L7.4 23.7" stroke="#fff" stroke-width="1.3"/></svg>
<div style="left:1003px;top:57px;width:34px;height:34px;background:#fff;border:1px solid #b9b9b9;box-shadow:inset 0 0 0 1px #f4f4f4;"></div>
<svg style="left:1006.9px;top:60.9px;overflow:visible" width="25.4" height="25.9" viewBox="1 1 24.80 26.50" preserveAspectRatio="none"><defs><linearGradient id="g17" x1="0" y1="0" x2="1" y2="0"><stop offset="0" stop-color="#ff9a7a"/><stop offset="1" stop-color="#de2c1c"/></linearGradient></defs><path d="M1 5 L6 2.4 L13 4 L13 11.6 L7 13.4 L1 11.6 Z" fill="#0a0a0a"/><path d="M1.6 5.2 L6 3 L12.4 4.4 L7 6.4 Z" fill="#2cae3a"/><ellipse cx="8.2" cy="3.2" rx="2.6" ry="1" fill="#e8e03a"/><path d="M1.6 6.4 L7 8 L12.4 6 L12.4 7.8 L7 9.8 L1.6 8.2 Z" fill="#2a46dc"/><path d="M1.6 9.2 L7 10.8 L12.4 8.8 L12.4 10.8 L7 12.8 L1.6 11.2 Z" fill="#e02a2a"/><path d="M2.6 7 L6 8 M2.6 9.9 L6 10.9 M8.4 7.6 L11.6 6.5 M8.4 10.5 L11.6 9.4" stroke="#fff" stroke-width="0.9" opacity="0.75"/><path d="M8.4 5.2 Q13.6 1.4 17.2 6 L19.6 4.6 L19 11 L12.8 9.6 L15 8.2 Q12.6 5.6 9.2 7.6 Z" fill="#20c030" stroke="#128420" stroke-width="0.6"/><path d="M5 14.4 L15 11.8 L17.4 13.2 L17.4 23.4 L5 24 Z" fill="url(#g17)" stroke="#a8201a" stroke-width="0.6"/><path d="M5 14.4 L15 11.8 L17.4 13.2 L7.6 15.8 Z" fill="#ffb49c"/><path d="M17.4 15.6 L22.6 15 L25.6 18.4 L25.6 24.4 L17.4 24.4 Z" fill="#6c7ab4" stroke="#3a4678" stroke-width="0.6"/><path d="M18.6 16.6 L22.2 16.2 L24.2 18.8 L18.6 19.2 Z" fill="#d0e0fa"/><rect x="17.6" y="21.4" width="8" height="1.4" fill="#9aa4cc"/><circle cx="9" cy="25" r="2.2" fill="#1a1a1a"/><circle cx="21.6" cy="25.4" r="2.2" fill="#1a1a1a"/><circle cx="9" cy="25" r="0.8" fill="#999"/><circle cx="21.6" cy="25.4" r="0.8" fill="#999"/></svg>
<div style="left:1073px;top:57px;width:34px;height:34px;background:#c9c9c9;border:1px solid #8e8e8e;box-shadow:inset 1px 1px 0 #f4f4f4;"></div>
<svg style="left:1079.8px;top:63.9px;overflow:visible" width="20.2" height="20.2" viewBox="0 0 20.20 20.20" preserveAspectRatio="none"><defs><radialGradient id="g18" cx="0.35" cy="0.3" r="0.9"><stop offset="0" stop-color="#fff"/><stop offset="0.55" stop-color="#f2f2f2"/><stop offset="1" stop-color="#9c9c9c"/></radialGradient></defs><path d="M10 6.5 Q12 3.6 15.4 4.6 Q19.6 4.4 19.6 8.6 Q21 12 18.4 14 Q16 16.4 12.6 15.4 Q9 15 9 11 Z" fill="#8a8a8a" stroke="#6e6e6e" stroke-width="0.5"/><path d="M1.2 10.4 Q-0.4 7.4 2.6 5.8 Q2.8 2.4 6.4 2.6 Q8.4 0 11.4 1.6 Q14.6 0.6 15.6 4 Q17.6 6.4 15.8 9 Q16.4 12.6 12.8 13 Q10.6 15.6 7.8 14 Q4.4 15.2 3.4 12.4 Q1.4 12.2 1.2 10.4 Z" fill="url(#g18)" stroke="#8c8c8c" stroke-width="0.5"/><path d="M19.9 0.1 L9.1 6.1 L13.3 8.3 L0.1 19.9 L18.5 10.5 L14.3 7.9 Z" fill="#f6ca16" stroke="#a07e08" stroke-width="0.6" stroke-linejoin="round"/><path d="M18 1.6 L11 5.9 L14.6 8 L4 17" fill="none" stroke="#fde870" stroke-width="0.7" opacity="0.8"/></svg>
<div style="left:1144px;top:57px;width:34px;height:34px;background:#fff;border:1px solid #b9b9b9;box-shadow:inset 0 0 0 1px #f4f4f4;"></div>
<svg style="left:1150.0px;top:62.9px;overflow:visible" width="22.0" height="22.0" viewBox="0 0 22.00 22.00" preserveAspectRatio="none"><defs><linearGradient id="g19" x1="0" y1="0" x2="1" y2="1"><stop offset="0" stop-color="#e8786a"/><stop offset="0.22" stop-color="#f6420e"/><stop offset="0.6" stop-color="#fb4a0a"/><stop offset="1" stop-color="#ff962a"/></linearGradient></defs><rect x="0.7" y="0.7" width="20.6" height="20.6" rx="2.2" fill="url(#g19)" stroke="#a81410" stroke-width="1.2"/><text x="11.1" y="15.3" text-anchor="middle" font-family="Liberation Sans" font-size="9.9" fill="#fff" textLength="18.6" lengthAdjust="spacingAndGlyphs">EXIT</text></svg>
<div style="left:1179px;top:92px;width:1px;height:1px;background:#fff;"></div>
<div style="left:8px;top:93px;width:1px;height:238px;background:#b4b4b4;"></div>
<div style="left:8px;top:330px;width:1171px;height:1px;background:#b4b4b4;"></div>
<div style="left:1178px;top:93px;width:1px;height:238px;background:#c2c2c2;"></div>
<div style="left:10px;top:118px;width:1168px;height:212px;background:#c5dbf3;border:1px solid #5f82c9;border-right-color:#7890b2;border-bottom-color:#7890b2;"></div>
<div style="left:12px;top:122px;width:1163px;height:205px;background:#fff;"></div>
<div style="left:12px;top:122px;width:1162px;height:204px;border:1px solid #b2b2b2;"></div>
<div style="left:13px;top:118px;width:88px;height:1px;background:#c5dbf3;"></div>
<div style="left:102px;top:119px;width:1075px;height:1px;background:#fff;"></div>
<svg style="left:12px;top:96px" width="90" height="22" viewBox="0 0 90 22"><path d="M2 22 L2 7.1 L7.1 2 L89 2 L89 22 Z" fill="#c64b2b"/><path d="M0.5 22 L0.5 6.5 L6.5 0.5 L89.5 0.5 L89.5 22" fill="none" stroke="#5f82c9" stroke-width="1"/></svg>
<div style="left:17.5px;top:100.53px;font-size:12px;line-height:14px;color:#fff;white-space:nowrap;font-weight:bold;letter-spacing:-0.1px;">Information</div>
<svg style="left:102px;top:96px" width="82" height="22" viewBox="0 0 82 22"><path d="M1 22 L1 6.9 L5.9 2 L81 2 L81 22 Z" fill="#fb9a4c"/><path d="M0.5 6 L5.5 0.5 L81.5 0.5 L81.5 22" fill="none" stroke="#6f87a2" stroke-width="1"/></svg>
<div style="left:107px;top:100.53px;font-size:12px;line-height:14px;color:#000;white-space:nowrap;letter-spacing:0.25px;">Customer</div>
<svg style="left:184px;top:96px" width="76" height="22" viewBox="0 0 76 22"><path d="M1 22 L1 6.9 L5.9 2 L75 2 L75 22 Z" fill="#fb9a4c"/><path d="M0.5 6 L5.5 0.5 L75.5 0.5 L75.5 22" fill="none" stroke="#6f87a2" stroke-width="1"/></svg>
<div style="left:189px;top:100.53px;font-size:12px;line-height:14px;color:#000;white-space:nowrap;letter-spacing:0.25px;">Contacts</div>
<svg style="left:260px;top:96px" width="57" height="22" viewBox="0 0 57 22"><path d="M1 22 L1 6.9 L5.9 2 L56 2 L56 22 Z" fill="#fb9a4c"/><path d="M0.5 6 L5.5 0.5 L56.5 0.5 L56.5 22" fill="none" stroke="#6f87a2" stroke-width="1"/></svg>
<div style="left:265px;top:100.53px;font-size:12px;line-height:14px;color:#000;white-space:nowrap;letter-spacing:0.25px;">Event</div>
<svg style="left:317px;top:96px" width="60" height="22" viewBox="0 0 60 22"><path d="M1 22 L1 6.9 L5.9 2 L59 2 L59 22 Z" fill="#fb9a4c"/><path d="M0.5 6 L5.5 0.5 L59.5 0.5 L59.5 22" fill="none" stroke="#6f87a2" stroke-width="1"/></svg>
<div style="left:322px;top:100.53px;font-size:12px;line-height:14px;color:#000;white-space:nowrap;letter-spacing:0.25px;">Dates</div>
<svg style="left:377px;top:96px" width="86" height="22" viewBox="0 0 86 22"><path d="M1 22 L1 6.9 L5.9 2 L85 2 L85 22 Z" fill="#fb9a4c"/><path d="M0.5 6 L5.5 0.5 L85.5 0.5 L85.5 22" fill="none" stroke="#6f87a2" stroke-width="1"/></svg>
<div style="left:382px;top:100.53px;font-size:12px;line-height:14px;color:#000;white-space:nowrap;letter-spacing:0.25px;">Schedules</div>
<svg style="left:463px;top:96px" width="76" height="22" viewBox="0 0 76 22"><path d="M1 22 L1 6.9 L5.9 2 L75 2 L75 22 Z" fill="#fb9a4c"/><path d="M0.5 6 L5.5 0.5 L75.5 0.5 L75.5 22" fill="none" stroke="#6f87a2" stroke-width="1"/></svg>
<div style="left:468px;top:100.53px;font-size:12px;line-height:14px;color:#000;white-space:nowrap;letter-spacing:0.25px;">Shipping</div>
<svg style="left:539px;top:96px" width="64" height="22" viewBox="0 0 64 22"><path d="M1 22 L1 6.9 L5.9 2 L63 2 L63 22 Z" fill="#fb9a4c"/><path d="M0.5 6 L5.5 0.5 L63.5 0.5 L63.5 22" fill="none" stroke="#6f87a2" stroke-width="1"/></svg>
<div style="left:544px;top:100.53px;font-size:12px;line-height:14px;color:#000;white-space:nowrap;letter-spacing:0.25px;">Return</div>
<svg style="left:603px;top:96px" width="75" height="22" viewBox="0 0 75 22"><path d="M1 22 L1 6.9 L5.9 2 L74 2 L74 22 Z" fill="#fb9a4c"/><path d="M0.5 6 L5.5 0.5 L74.5 0.5 L74.5 22" fill="none" stroke="#6f87a2" stroke-width="1"/></svg>
<div style="left:608px;top:100.53px;font-size:12px;line-height:14px;color:#000;white-space:nowrap;letter-spacing:0.25px;">Payment</div>
<svg style="left:678px;top:96px" width="66" height="22" viewBox="0 0 66 22"><path d="M1 22 L1 6.9 L5.9 2 L65 2 L65 22 Z" fill="#fb9a4c"/><path d="M0.5 6 L5.5 0.5 L65.5 0.5 L65.5 22" fill="none" stroke="#6f87a2" stroke-width="1"/></svg>
<div style="left:683px;top:100.53px;font-size:12px;line-height:14px;color:#000;white-space:nowrap;letter-spacing:0.25px;">Default</div>
<svg style="left:744px;top:96px" width="53" height="22" viewBox="0 0 53 22"><path d="M1 22 L1 6.9 L5.9 2 L52 2 L52 22 Z" fill="#fb9a4c"/><path d="M0.5 6 L5.5 0.5 L52.5 0.5 L52.5 22" fill="none" stroke="#6f87a2" stroke-width="1"/></svg>
<div style="left:749px;top:100.53px;font-size:12px;line-height:14px;color:#000;white-space:nowrap;letter-spacing:0.25px;">Cost</div>
<svg style="left:797px;top:96px" width="79" height="22" viewBox="0 0 79 22"><path d="M1 22 L1 6.9 L5.9 2 L78 2 L78 22 Z" fill="#fb9a4c"/><path d="M0.5 6 L5.5 0.5 L78.5 0.5 L78.5 22" fill="none" stroke="#6f87a2" stroke-width="1"/></svg>
<div style="left:802px;top:100.53px;font-size:12px;line-height:14px;color:#000;white-space:nowrap;letter-spacing:0.25px;">Sub Total</div>
<svg style="left:876px;top:96px" width="62" height="22" viewBox="0 0 62 22"><path d="M1 22 L1 6.9 L5.9 2 L61 2 L61 22 Z" fill="#fb9a4c"/><path d="M0.5 6 L5.5 0.5 L61.5 0.5 L61.5 22" fill="none" stroke="#6f87a2" stroke-width="1"/></svg>
<div style="left:881px;top:100.53px;font-size:12px;line-height:14px;color:#000;white-space:nowrap;letter-spacing:0.25px;">Status</div>
<svg style="left:938px;top:96px" width="105" height="22" viewBox="0 0 105 22"><path d="M1 22 L1 6.9 L5.9 2 L104 2 L104 22 Z" fill="#fb9a4c"/><path d="M0.5 6 L5.5 0.5 L104.5 0.5 L104.5 22" fill="none" stroke="#6f87a2" stroke-width="1"/></svg>
<div style="left:943px;top:100.53px;font-size:12px;line-height:14px;color:#000;white-space:nowrap;letter-spacing:0.25px;">Flat Discounts</div>
<div style="left:17.5px;top:130.53px;font-size:12px;line-height:14px;color:#2c2c2c;white-space:nowrap;letter-spacing:0.463px;">Number</div>
<div style="left:99px;top:128px;width:100px;height:24px;background:#ececec;border:1px solid #858585;box-sizing:border-box;"></div>
<div style="left:100.5px;top:134.03px;font-size:12px;line-height:14px;color:#2c2c2c;white-space:nowrap;letter-spacing:0.05px;">ORD-370</div>
<div style="left:212px;top:130.53px;font-size:12px;line-height:14px;color:#2c2c2c;white-space:nowrap;letter-spacing:0.411px;">Version</div>
<div style="left:264px;top:128px;width:88px;height:24px;background:#ececec;border:1px solid #858585;box-sizing:border-box;"></div>
<div style="left:265.5px;top:134.03px;font-size:12px;line-height:14px;color:#2c2c2c;white-space:nowrap;letter-spacing:0.05px;">1</div>
<svg style="left:333px;top:130px" width="16" height="16" viewBox="0 0 16 16"><defs><radialGradient id="g20" cx="0.45" cy="0.45" r="0.6"><stop offset="0" stop-color="#d6f6ff"/><stop offset="0.6" stop-color="#bfe9fd"/><stop offset="1" stop-color="#a4d2f6"/></radialGradient><linearGradient id="g20r" x1="0" y1="1" x2="1" y2="0"><stop offset="0" stop-color="#55556c"/><stop offset="0.5" stop-color="#7c7c98"/><stop offset="1" stop-color="#b8bcdc"/></linearGradient></defs><path d="M9.4 9.6 L14.3 14.4" stroke="#6a6284" stroke-width="3" stroke-linecap="round"/><path d="M10.4 8.9 L15 13.3" stroke="#f59a28" stroke-width="2.2" stroke-linecap="butt"/><path d="M10.9 8.5 L15.4 12.8" stroke="#fbbf6a" stroke-width="0.7"/><circle cx="5.8" cy="5.3" r="4.7" fill="url(#g20)" stroke="url(#g20r)" stroke-width="1.3"/><path d="M6.6 2 Q9.2 2.6 9.4 5.4 Q8.4 3.4 6.6 2 Z" fill="#fff" opacity="0.95"/><ellipse cx="4" cy="7" rx="1.5" ry="1" fill="#fff" opacity="0.8" transform="rotate(-35 4 7)"/></svg>
<div style="left:17.5px;top:158.53px;font-size:12px;line-height:14px;color:#2c2c2c;white-space:nowrap;letter-spacing:0.297px;">Description</div>
<div style="left:99px;top:156px;width:255px;height:24px;background:#fff;border:1px solid #000;box-sizing:border-box;"></div>
<div style="left:17.5px;top:186.53px;font-size:12px;line-height:14px;color:#2c2c2c;white-space:nowrap;letter-spacing:0.148px;">Date Created</div>
<div style="left:99px;top:184px;width:100px;height:24px;background:#ececec;border:1px solid #858585;box-sizing:border-box;"></div>
<div style="left:100.5px;top:190.03px;font-size:12px;line-height:14px;color:#2c2c2c;white-space:nowrap;letter-spacing:0.05px;">05/03/2018</div>
<div style="left:212px;top:186.53px;font-size:12px;line-height:14px;color:#2c2c2c;white-space:nowrap;letter-spacing:0.273px;">Project</div>
<div style="left:264px;top:184px;width:88px;height:24px;background:#fff;border:1px solid #000;box-sizing:border-box;"></div>
<div style="left:265.5px;top:190.03px;font-size:12px;line-height:14px;color:#2c2c2c;white-space:nowrap;letter-spacing:0.05px;">ORD-370</div>
<svg style="left:333px;top:186px" width="16" height="16" viewBox="0 0 16 16"><defs><radialGradient id="g21" cx="0.45" cy="0.45" r="0.6"><stop offset="0" stop-color="#d6f6ff"/><stop offset="0.6" stop-color="#bfe9fd"/><stop offset="1" stop-color="#a4d2f6"/></radialGradient><linearGradient id="g21r" x1="0" y1="1" x2="1" y2="0"><stop offset="0" stop-color="#55556c"/><stop offset="0.5" stop-color="#7c7c98"/><stop offset="1" stop-color="#b8bcdc"/></linearGradient></defs><path d="M9.4 9.6 L14.3 14.4" stroke="#6a6284" stroke-width="3" stroke-linecap="round"/><path d="M10.4 8.9 L15 13.3" stroke="#f59a28" stroke-width="2.2" stroke-linecap="butt"/><path d="M10.9 8.5 L15.4 12.8" stroke="#fbbf6a" stroke-width="0.7"/><circle cx="5.8" cy="5.3" r="4.7" fill="url(#g21)" stroke="url(#g21r)" stroke-width="1.3"/><path d="M6.6 2 Q9.2 2.6 9.4 5.4 Q8.4 3.4 6.6 2 Z" fill="#fff" opacity="0.95"/><ellipse cx="4" cy="7" rx="1.5" ry="1" fill="#fff" opacity="0.8" transform="rotate(-35 4 7)"/></svg>
<div style="left:17.5px;top:214.53px;font-size:12px;line-height:14px;color:#2c2c2c;white-space:nowrap;letter-spacing:-0.062px;">Site</div>
<div style="left:99px;top:212px;width:100px;height:24px;background:#ececec;border:1px solid #858585;box-sizing:border-box;"></div>
<div style="left:100.5px;top:218.03px;font-size:12px;line-height:14px;color:#2c2c2c;white-space:nowrap;letter-spacing:0.05px;">PARIS</div>
<div style="left:212px;top:214.53px;font-size:12px;line-height:14px;color:#2c2c2c;white-space:nowrap;letter-spacing:0.182px;">Sub Orders</div>
<div style="left:289px;top:212px;width:66px;height:24px;background:#ececec;border:1px solid #858585;box-sizing:border-box;"></div>
<div style="left:290.5px;top:218.03px;font-size:12px;line-height:14px;color:#2c2c2c;white-space:nowrap;letter-spacing:0.05px;">0</div>
<div style="left:17.5px;top:242.53px;font-size:12px;line-height:14px;color:#2c2c2c;white-space:nowrap;letter-spacing:-0.003px;">Project Mgr.</div>
<div style="left:17.5px;top:270.53px;font-size:12px;line-height:14px;color:#2c2c2c;white-space:nowrap;letter-spacing:0.33px;">Sales Person</div>
<div style="left:99px;top:240px;width:255px;height:24px;background:#ececec;border:1px solid #7b8ea9;box-shadow:inset 0 0 0 1px #bdd6f0;"></div>
<div style="left:334px;top:240px;width:20px;height:24px;background:linear-gradient(#e4edf8,#f4f8fc 35%,#c3d6ec);border:1px solid #7b8ea9;"></div>
<svg style="left:339px;top:250px" width="10" height="5"><path d="M0 0 L10 0 L5 5 Z" fill="#2a2a2a"/></svg>
<svg style="left:318px;top:242px" width="16" height="16" viewBox="0 0 16 16"><defs><radialGradient id="g22" cx="0.45" cy="0.45" r="0.6"><stop offset="0" stop-color="#d6f6ff"/><stop offset="0.6" stop-color="#bfe9fd"/><stop offset="1" stop-color="#a4d2f6"/></radialGradient><linearGradient id="g22r" x1="0" y1="1" x2="1" y2="0"><stop offset="0" stop-color="#55556c"/><stop offset="0.5" stop-color="#7c7c98"/><stop offset="1" stop-color="#b8bcdc"/></linearGradient></defs><path d="M9.4 9.6 L14.3 14.4" stroke="#6a6284" stroke-width="3" stroke-linecap="round"/><path d="M10.4 8.9 L15 13.3" stroke="#f59a28" stroke-width="2.2" stroke-linecap="butt"/><path d="M10.9 8.5 L15.4 12.8" stroke="#fbbf6a" stroke-width="0.7"/><circle cx="5.8" cy="5.3" r="4.7" fill="url(#g22)" stroke="url(#g22r)" stroke-width="1.3"/><path d="M6.6 2 Q9.2 2.6 9.4 5.4 Q8.4 3.4 6.6 2 Z" fill="#fff" opacity="0.95"/><ellipse cx="4" cy="7" rx="1.5" ry="1" fill="#fff" opacity="0.8" transform="rotate(-35 4 7)"/></svg>
<div style="left:99px;top:268px;width:255px;height:24px;background:#ececec;border:1px solid #7b8ea9;box-shadow:inset 0 0 0 1px #bdd6f0;"></div>
<div style="left:334px;top:268px;width:20px;height:24px;background:linear-gradient(#e4edf8,#f4f8fc 35%,#c3d6ec);border:1px solid #7b8ea9;"></div>
<svg style="left:339px;top:278px" width="10" height="5"><path d="M0 0 L10 0 L5 5 Z" fill="#2a2a2a"/></svg>
<svg style="left:318px;top:270px" width="16" height="16" viewBox="0 0 16 16"><defs><radialGradient id="g23" cx="0.45" cy="0.45" r="0.6"><stop offset="0" stop-color="#d6f6ff"/><stop offset="0.6" stop-color="#bfe9fd"/><stop offset="1" stop-color="#a4d2f6"/></radialGradient><linearGradient id="g23r" x1="0" y1="1" x2="1" y2="0"><stop offset="0" stop-color="#55556c"/><stop offset="0.5" stop-color="#7c7c98"/><stop offset="1" stop-color="#b8bcdc"/></linearGradient></defs><path d="M9.4 9.6 L14.3 14.4" stroke="#6a6284" stroke-width="3" stroke-linecap="round"/><path d="M10.4 8.9 L15 13.3" stroke="#f59a28" stroke-width="2.2" stroke-linecap="butt"/><path d="M10.9 8.5 L15.4 12.8" stroke="#fbbf6a" stroke-width="0.7"/><circle cx="5.8" cy="5.3" r="4.7" fill="url(#g23)" stroke="url(#g23r)" stroke-width="1.3"/><path d="M6.6 2 Q9.2 2.6 9.4 5.4 Q8.4 3.4 6.6 2 Z" fill="#fff" opacity="0.95"/><ellipse cx="4" cy="7" rx="1.5" ry="1" fill="#fff" opacity="0.8" transform="rotate(-35 4 7)"/></svg>
<div style="left:17.5px;top:298.53px;font-size:12px;line-height:14px;color:#2c2c2c;white-space:nowrap;letter-spacing:0.259px;">Labor Planner</div>
<div style="left:99px;top:296px;width:255px;height:24px;background:#fff;border:1px solid #000;box-sizing:border-box;"></div>
<svg style="left:335px;top:298px" width="16" height="16" viewBox="0 0 16 16"><defs><radialGradient id="g24" cx="0.45" cy="0.45" r="0.6"><stop offset="0" stop-color="#d6f6ff"/><stop offset="0.6" stop-color="#bfe9fd"/><stop offset="1" stop-color="#a4d2f6"/></radialGradient><linearGradient id="g24r" x1="0" y1="1" x2="1" y2="0"><stop offset="0" stop-color="#55556c"/><stop offset="0.5" stop-color="#7c7c98"/><stop offset="1" stop-color="#b8bcdc"/></linearGradient></defs><path d="M9.4 9.6 L14.3 14.4" stroke="#6a6284" stroke-width="3" stroke-linecap="round"/><path d="M10.4 8.9 L15 13.3" stroke="#f59a28" stroke-width="2.2" stroke-linecap="butt"/><path d="M10.9 8.5 L15.4 12.8" stroke="#fbbf6a" stroke-width="0.7"/><circle cx="5.8" cy="5.3" r="4.7" fill="url(#g24)" stroke="url(#g24r)" stroke-width="1.3"/><path d="M6.6 2 Q9.2 2.6 9.4 5.4 Q8.4 3.4 6.6 2 Z" fill="#fff" opacity="0.95"/><ellipse cx="4" cy="7" rx="1.5" ry="1" fill="#fff" opacity="0.8" transform="rotate(-35 4 7)"/></svg>
<div style="left:366px;top:131px;width:215px;height:98px;border:1px solid #bdbdbd;"></div>
<div style="left:371px;top:126px;width:96px;height:14px;background:#fff;"></div>
<div style="left:373px;top:126.03px;font-size:12px;line-height:14px;color:#222;white-space:nowrap;font-weight:bold;letter-spacing:-0.144px;">Charge Duration</div>
<div style="left:369.5px;top:144.03px;font-size:12px;line-height:14px;color:#2c2c2c;white-space:nowrap;letter-spacing:0.066px;">Start Date/Time</div>
<div style="left:458px;top:141px;width:120px;height:24px;background:#ececec;border:1px solid #858585;box-sizing:border-box;"></div>
<div style="left:459.5px;top:147.03px;font-size:12px;line-height:14px;color:#2c2c2c;white-space:nowrap;letter-spacing:0.05px;">05/07/2018</div>
<div style="left:369.5px;top:173.03px;font-size:12px;line-height:14px;color:#2c2c2c;white-space:nowrap;letter-spacing:0.159px;">End Date/Time</div>
<div style="left:458px;top:170px;width:120px;height:24px;background:#ececec;border:1px solid #858585;box-sizing:border-box;"></div>
<div style="left:459.5px;top:176.03px;font-size:12px;line-height:14px;color:#2c2c2c;white-space:nowrap;letter-spacing:0.05px;">05/11/2018</div>
<div style="left:369.5px;top:202.03px;font-size:12px;line-height:14px;color:#2c2c2c;white-space:nowrap;letter-spacing:0.163px;">Duration</div>
<div style="left:458px;top:199px;width:85px;height:24px;background:#ececec;border:1px solid #858585;box-sizing:border-box;"></div>
<div style="left:459.5px;top:205.03px;font-size:12px;line-height:14px;color:#2c2c2c;white-space:nowrap;letter-spacing:0.05px;">5d</div>
<div style="left:362.5px;top:242.03px;font-size:12px;line-height:14px;color:#2c2c2c;white-space:nowrap;letter-spacing:0.498px;">Customer</div>
<div style="left:421px;top:236px;width:160px;height:24px;background:#ececec;border:1px solid #858585;box-sizing:border-box;"></div>
<div style="left:422.5px;top:241.53px;font-size:12px;line-height:14px;color:#2c2c2c;white-space:nowrap;letter-spacing:0.05px;">LG ELECTRONICS</div>
<svg style="left:562px;top:238px" width="16" height="16" viewBox="0 0 16 16"><defs><radialGradient id="g25" cx="0.45" cy="0.45" r="0.6"><stop offset="0" stop-color="#d6f6ff"/><stop offset="0.6" stop-color="#bfe9fd"/><stop offset="1" stop-color="#a4d2f6"/></radialGradient><linearGradient id="g25r" x1="0" y1="1" x2="1" y2="0"><stop offset="0" stop-color="#55556c"/><stop offset="0.5" stop-color="#7c7c98"/><stop offset="1" stop-color="#b8bcdc"/></linearGradient></defs><path d="M9.4 9.6 L14.3 14.4" stroke="#6a6284" stroke-width="3" stroke-linecap="round"/><path d="M10.4 8.9 L15 13.3" stroke="#f59a28" stroke-width="2.2" stroke-linecap="butt"/><path d="M10.9 8.5 L15.4 12.8" stroke="#fbbf6a" stroke-width="0.7"/><circle cx="5.8" cy="5.3" r="4.7" fill="url(#g25)" stroke="url(#g25r)" stroke-width="1.3"/><path d="M6.6 2 Q9.2 2.6 9.4 5.4 Q8.4 3.4 6.6 2 Z" fill="#fff" opacity="0.95"/><ellipse cx="4" cy="7" rx="1.5" ry="1" fill="#fff" opacity="0.8" transform="rotate(-35 4 7)"/></svg>
<div style="left:362.5px;top:270.03px;font-size:12px;line-height:14px;color:#2c2c2c;white-space:nowrap;letter-spacing:0.19px;">Contact</div>
<div style="left:421px;top:265px;width:160px;height:24px;background:#ececec;border:1px solid #858585;box-sizing:border-box;"></div>
<div style="left:422.5px;top:270.53px;font-size:12px;line-height:14px;color:#2c2c2c;white-space:nowrap;letter-spacing:0.05px;">TOM HIDDLESTON</div>
<svg style="left:562px;top:267px" width="16" height="16" viewBox="0 0 16 16"><defs><radialGradient id="g26" cx="0.45" cy="0.45" r="0.6"><stop offset="0" stop-color="#d6f6ff"/><stop offset="0.6" stop-color="#bfe9fd"/><stop offset="1" stop-color="#a4d2f6"/></radialGradient><linearGradient id="g26r" x1="0" y1="1" x2="1" y2="0"><stop offset="0" stop-color="#55556c"/><stop offset="0.5" stop-color="#7c7c98"/><stop offset="1" stop-color="#b8bcdc"/></linearGradient></defs><path d="M9.4 9.6 L14.3 14.4" stroke="#6a6284" stroke-width="3" stroke-linecap="round"/><path d="M10.4 8.9 L15 13.3" stroke="#f59a28" stroke-width="2.2" stroke-linecap="butt"/><path d="M10.9 8.5 L15.4 12.8" stroke="#fbbf6a" stroke-width="0.7"/><circle cx="5.8" cy="5.3" r="4.7" fill="url(#g26)" stroke="url(#g26r)" stroke-width="1.3"/><path d="M6.6 2 Q9.2 2.6 9.4 5.4 Q8.4 3.4 6.6 2 Z" fill="#fff" opacity="0.95"/><ellipse cx="4" cy="7" rx="1.5" ry="1" fill="#fff" opacity="0.8" transform="rotate(-35 4 7)"/></svg>
<div style="left:362.5px;top:299.03px;font-size:12px;line-height:14px;color:#2c2c2c;white-space:nowrap;letter-spacing:0.223px;">Contact Tel #</div>
<div style="left:451px;top:294px;width:130px;height:24px;background:#ececec;border:1px solid #858585;box-sizing:border-box;"></div>
<div style="left:452.5px;top:299.53px;font-size:12px;line-height:14px;color:#2c2c2c;white-space:nowrap;letter-spacing:0.05px;">+44-17-5349-1585</div>
<div style="left:588px;top:130.53px;font-size:12px;line-height:14px;color:#2c2c2c;white-space:nowrap;letter-spacing:0.095px;">Conv. Date</div>
<div style="left:655px;top:126px;width:89px;height:24px;background:#ececec;border:1px solid #858585;box-sizing:border-box;"></div>
<svg style="left:590px;top:160px" width="12" height="12" viewBox="0 0 12 12"><defs><linearGradient id="g27" x1="0" y1="0" x2="1" y2="1"><stop offset="0.25" stop-color="#ffffff"/><stop offset="1" stop-color="#f3a06a"/></linearGradient></defs><rect x="0.5" y="0.5" width="11" height="11" fill="url(#g27)" stroke="#76828f"/><path d="M0.5 12 L0.5 0.5 L12 0.5" fill="none" stroke="#5f6b78"/><path d="M2.8 6.4 L4.8 9 L9.6 3" fill="none" stroke="#111" stroke-width="2"/></svg>
<div style="left:606.5px;top:160.03px;font-size:12px;line-height:14px;color:#2c2c2c;white-space:nowrap;letter-spacing:0.273px;">Show Suggestions</div>
<svg style="left:590px;top:180px" width="12" height="12" viewBox="0 0 12 12"><defs><linearGradient id="g28" x1="0" y1="0" x2="1" y2="1"><stop offset="0.25" stop-color="#ffffff"/><stop offset="1" stop-color="#f3a06a"/></linearGradient></defs><rect x="0.5" y="0.5" width="11" height="11" fill="url(#g28)" stroke="#76828f"/><path d="M0.5 12 L0.5 0.5 L12 0.5" fill="none" stroke="#5f6b78"/></svg>
<div style="left:606.5px;top:180.03px;font-size:12px;line-height:14px;color:#9a9a9a;white-space:nowrap;letter-spacing:0.025px;">Event Pricing</div>
<svg style="left:590px;top:200px" width="12" height="12" viewBox="0 0 12 12"><defs><linearGradient id="g29" x1="0" y1="0" x2="1" y2="1"><stop offset="0.25" stop-color="#ffffff"/><stop offset="1" stop-color="#f3a06a"/></linearGradient></defs><rect x="0.5" y="0.5" width="11" height="11" fill="url(#g29)" stroke="#76828f"/><path d="M0.5 12 L0.5 0.5 L12 0.5" fill="none" stroke="#5f6b78"/><path d="M2.8 6.4 L4.8 9 L9.6 3" fill="none" stroke="#111" stroke-width="2"/></svg>
<div style="left:606.5px;top:200.03px;font-size:12px;line-height:14px;color:#2c2c2c;white-space:nowrap;letter-spacing:0.04px;">Day-Week-Month Pricing</div>
<div style="left:588px;top:241.03px;font-size:12px;line-height:14px;color:#2c2c2c;white-space:nowrap;letter-spacing:0.201px;">Bill To</div>
<div style="left:654px;top:236px;width:160px;height:24px;background:#ececec;border:1px solid #858585;box-sizing:border-box;"></div>
<div style="left:655.5px;top:241.53px;font-size:12px;line-height:14px;color:#2c2c2c;white-space:nowrap;letter-spacing:0.05px;">LG ELECTRONICS</div>
<svg style="left:795px;top:238px" width="16" height="16" viewBox="0 0 16 16"><defs><radialGradient id="g30" cx="0.45" cy="0.45" r="0.6"><stop offset="0" stop-color="#d6f6ff"/><stop offset="0.6" stop-color="#bfe9fd"/><stop offset="1" stop-color="#a4d2f6"/></radialGradient><linearGradient id="g30r" x1="0" y1="1" x2="1" y2="0"><stop offset="0" stop-color="#55556c"/><stop offset="0.5" stop-color="#7c7c98"/><stop offset="1" stop-color="#b8bcdc"/></linearGradient></defs><path d="M9.4 9.6 L14.3 14.4" stroke="#6a6284" stroke-width="3" stroke-linecap="round"/><path d="M10.4 8.9 L15 13.3" stroke="#f59a28" stroke-width="2.2" stroke-linecap="butt"/><path d="M10.9 8.5 L15.4 12.8" stroke="#fbbf6a" stroke-width="0.7"/><circle cx="5.8" cy="5.3" r="4.7" fill="url(#g30)" stroke="url(#g30r)" stroke-width="1.3"/><path d="M6.6 2 Q9.2 2.6 9.4 5.4 Q8.4 3.4 6.6 2 Z" fill="#fff" opacity="0.95"/><ellipse cx="4" cy="7" rx="1.5" ry="1" fill="#fff" opacity="0.8" transform="rotate(-35 4 7)"/></svg>
<div style="left:588px;top:270.03px;font-size:12px;line-height:14px;color:#2c2c2c;white-space:nowrap;letter-spacing:0.118px;">Bill Contact</div>
<div style="left:654px;top:265px;width:160px;height:24px;background:#ececec;border:1px solid #858585;box-sizing:border-box;"></div>
<div style="left:655.5px;top:270.53px;font-size:12px;line-height:14px;color:#2c2c2c;white-space:nowrap;letter-spacing:0.05px;">TOM HIDDLESTON</div>
<svg style="left:795px;top:267px" width="16" height="16" viewBox="0 0 16 16"><defs><radialGradient id="g31" cx="0.45" cy="0.45" r="0.6"><stop offset="0" stop-color="#d6f6ff"/><stop offset="0.6" stop-color="#bfe9fd"/><stop offset="1" stop-color="#a4d2f6"/></radialGradient><linearGradient id="g31r" x1="0" y1="1" x2="1" y2="0"><stop offset="0" stop-color="#55556c"/><stop offset="0.5" stop-color="#7c7c98"/><stop offset="1" stop-color="#b8bcdc"/></linearGradient></defs><path d="M9.4 9.6 L14.3 14.4" stroke="#6a6284" stroke-width="3" stroke-linecap="round"/><path d="M10.4 8.9 L15 13.3" stroke="#f59a28" stroke-width="2.2" stroke-linecap="butt"/><path d="M10.9 8.5 L15.4 12.8" stroke="#fbbf6a" stroke-width="0.7"/><circle cx="5.8" cy="5.3" r="4.7" fill="url(#g31)" stroke="url(#g31r)" stroke-width="1.3"/><path d="M6.6 2 Q9.2 2.6 9.4 5.4 Q8.4 3.4 6.6 2 Z" fill="#fff" opacity="0.95"/><ellipse cx="4" cy="7" rx="1.5" ry="1" fill="#fff" opacity="0.8" transform="rotate(-35 4 7)"/></svg>
<div style="left:588px;top:299.03px;font-size:12px;line-height:14px;color:#2c2c2c;white-space:nowrap;letter-spacing:0.301px;">Language</div>
<div style="left:654px;top:294px;width:90px;height:24px;background:#ececec;border:1px solid #858585;box-sizing:border-box;"></div>
<svg style="left:725px;top:296px" width="16" height="16" viewBox="0 0 16 16"><defs><radialGradient id="g32" cx="0.45" cy="0.45" r="0.6"><stop offset="0" stop-color="#d6f6ff"/><stop offset="0.6" stop-color="#bfe9fd"/><stop offset="1" stop-color="#a4d2f6"/></radialGradient><linearGradient id="g32r" x1="0" y1="1" x2="1" y2="0"><stop offset="0" stop-color="#55556c"/><stop offset="0.5" stop-color="#7c7c98"/><stop offset="1" stop-color="#b8bcdc"/></linearGradient></defs><path d="M9.4 9.6 L14.3 14.4" stroke="#6a6284" stroke-width="3" stroke-linecap="round"/><path d="M10.4 8.9 L15 13.3" stroke="#f59a28" stroke-width="2.2" stroke-linecap="butt"/><path d="M10.9 8.5 L15.4 12.8" stroke="#fbbf6a" stroke-width="0.7"/><circle cx="5.8" cy="5.3" r="4.7" fill="url(#g32)" stroke="url(#g32r)" stroke-width="1.3"/><path d="M6.6 2 Q9.2 2.6 9.4 5.4 Q8.4 3.4 6.6 2 Z" fill="#fff" opacity="0.95"/><ellipse cx="4" cy="7" rx="1.5" ry="1" fill="#fff" opacity="0.8" transform="rotate(-35 4 7)"/></svg>
<div style="left:752px;top:148px;width:290px;height:82px;background:#c5dbf3;border:1px solid #5f82c9;border-right-color:#7890b2;border-bottom-color:#7890b2;"></div>
<div style="left:754px;top:151px;width:285px;height:76px;background:#fff;"></div>
<div style="left:754px;top:151px;width:284px;height:75px;border:1px solid #b2b2b2;"></div>
<div style="left:757px;top:148px;width:86px;height:1px;background:#c5dbf3;"></div>
<div style="left:761px;top:154px;width:269px;height:69px;background:#ececec;border:2px solid #7d828a;border-top-color:#858a92;border-left-color:#858a92;"></div>
<svg style="left:755px;top:127px" width="89" height="21" viewBox="0 0 89 21"><path d="M2 21 L2 7.1 L7.1 2 L88 2 L88 21 Z" fill="#c64b2b"/><path d="M0.5 21 L0.5 6.5 L6.5 0.5 L88.5 0.5 L88.5 21" fill="none" stroke="#5f82c9" stroke-width="1"/></svg>
<div style="left:759.5px;top:131.03px;font-size:12px;line-height:14px;color:#fff;white-space:nowrap;font-weight:bold;letter-spacing:-0.1px;">Comments</div>
<svg style="left:844px;top:127px" width="120" height="21" viewBox="0 0 120 21"><path d="M1 21 L1 6.9 L5.9 2 L119 2 L119 21 Z" fill="#fb9a4c"/><path d="M0.5 6 L5.5 0.5 L119.5 0.5 L119.5 21" fill="none" stroke="#6f87a2" stroke-width="1"/></svg>
<div style="left:849.5px;top:131.03px;font-size:12px;line-height:14px;color:#000;white-space:nowrap;letter-spacing:0.25px;">LaborComments</div>
<svg style="left:1011px;top:157px" width="16" height="16" viewBox="0 0 16 16"><defs><radialGradient id="g33" cx="0.45" cy="0.45" r="0.6"><stop offset="0" stop-color="#d6f6ff"/><stop offset="0.6" stop-color="#bfe9fd"/><stop offset="1" stop-color="#a4d2f6"/></radialGradient><linearGradient id="g33r" x1="0" y1="1" x2="1" y2="0"><stop offset="0" stop-color="#55556c"/><stop offset="0.5" stop-color="#7c7c98"/><stop offset="1" stop-color="#b8bcdc"/></linearGradient></defs><path d="M9.4 9.6 L14.3 14.4" stroke="#6a6284" stroke-width="3" stroke-linecap="round"/><path d="M10.4 8.9 L15 13.3" stroke="#f59a28" stroke-width="2.2" stroke-linecap="butt"/><path d="M10.9 8.5 L15.4 12.8" stroke="#fbbf6a" stroke-width="0.7"/><circle cx="5.8" cy="5.3" r="4.7" fill="url(#g33)" stroke="url(#g33r)" stroke-width="1.3"/><path d="M6.6 2 Q9.2 2.6 9.4 5.4 Q8.4 3.4 6.6 2 Z" fill="#fff" opacity="0.95"/><ellipse cx="4" cy="7" rx="1.5" ry="1" fill="#fff" opacity="0.8" transform="rotate(-35 4 7)"/></svg>
<div style="left:826.5px;top:248.03px;font-size:12px;line-height:14px;color:#2c2c2c;white-space:nowrap;letter-spacing:0.175px;">Document Folder:</div>
<div style="left:826px;top:264px;width:216px;height:49px;background:#ececec;border:2px solid #7b7f86;border-top-color:#8a8e96;border-left-color:#8a8e96;"></div>
<div style="left:1014px;top:240px;width:49px;height:23px;border:1px solid #c9c9c9;background:#fff;"></div>
<div style="left:1024px;top:242px;width:30px;height:20px;border:1px solid #6e6e6e;background:#fff;border-radius:1px;"></div>
<div style="left:1025.5px;top:245.36px;font-size:11px;line-height:13px;color:#111;white-space:nowrap;letter-spacing:0.2px;letter-spacing:-0.3px;-webkit-text-stroke:0.3px #111;">Reset</div>
<div style="left:8px;top:356px;width:1172px;height:300px;background:#c5dbf3;border:1px solid #5f82c9;border-right-color:#7890b2;border-bottom-color:#7890b2;"></div>
<div style="left:10px;top:360px;width:1167px;height:293px;background:#fff;"></div>
<div style="left:10px;top:360px;width:1166px;height:292px;border:1px solid #b2b2b2;"></div>
<div style="left:11px;top:356px;width:65px;height:1px;background:#c5dbf3;"></div>
<svg style="left:10px;top:334px" width="67" height="22" viewBox="0 0 67 22"><path d="M2 22 L2 7.1 L7.1 2 L66 2 L66 22 Z" fill="#c64b2b"/><path d="M0.5 22 L0.5 6.5 L6.5 0.5 L66.5 0.5 L66.5 22" fill="none" stroke="#5f82c9" stroke-width="1"/></svg>
<div style="left:15.5px;top:339.03px;font-size:12px;line-height:14px;color:#fff;white-space:nowrap;font-weight:bold;letter-spacing:-0.1px;">Item(s)</div>
<svg style="left:77px;top:334px" width="58" height="22" viewBox="0 0 58 22"><path d="M1 22 L1 6.9 L5.9 2 L57 2 L57 22 Z" fill="#fb9a4c"/><path d="M0.5 6 L5.5 0.5 L57.5 0.5 L57.5 22" fill="none" stroke="#6f87a2" stroke-width="1"/></svg>
<div style="left:82px;top:339.03px;font-size:12px;line-height:14px;color:#000;white-space:nowrap;letter-spacing:0.25px;">Labor</div>
<div style="left:45px;top:369.03px;font-size:12px;line-height:14px;color:#2c2c2c;white-space:nowrap;letter-spacing:0.114px;">Search :</div>
<div style="left:120px;top:369.03px;font-size:12px;line-height:14px;color:#2c2c2c;white-space:nowrap;letter-spacing:0.496px;">Asset</div>
<div style="left:162px;top:365px;width:120px;height:24px;background:#fff;border:1px solid #000;box-sizing:border-box;"></div>
<div style="left:362.5px;top:369.03px;font-size:12px;line-height:14px;color:#2c2c2c;white-space:nowrap;letter-spacing:0.19px;">Product</div>
<div style="left:412px;top:365px;width:195px;height:24px;background:#fff;border:1px solid #000;box-sizing:border-box;"></div>
<div style="left:625px;top:368.53px;font-size:12px;line-height:14px;color:#2c2c2c;white-space:nowrap;letter-spacing:-0.586px;">Qty</div>
<div style="left:647px;top:365px;width:40px;height:24px;background:#fff;border:1px solid #000;box-sizing:border-box;"></div>
<div style="left:648.5px;top:371.03px;font-size:12px;line-height:14px;color:#2c2c2c;white-space:nowrap;letter-spacing:0.05px;">1</div>
<svg style="left:707px;top:371px" width="12" height="12" viewBox="0 0 12 12"><defs><linearGradient id="g34" x1="0" y1="0" x2="1" y2="1"><stop offset="0.25" stop-color="#ffffff"/><stop offset="1" stop-color="#f3a06a"/></linearGradient></defs><rect x="0.5" y="0.5" width="11" height="11" fill="url(#g34)" stroke="#76828f"/><path d="M0.5 12 L0.5 0.5 L12 0.5" fill="none" stroke="#5f6b78"/></svg>
<div style="left:724.5px;top:370.53px;font-size:12px;line-height:14px;color:#2c2c2c;white-space:nowrap;letter-spacing:0.188px;">Update existing lines</div>
<div style="left:10px;top:393px;width:1166px;height:1px;background:#b4b4b4;"></div>
<div style="left:10px;top:395px;width:1166px;height:1px;background:#b4b4b4;"></div>
<div style="left:12px;top:397px;width:1162px;height:253px;border:1px solid #728ba5;"></div>
<div style="left:13px;top:398px;width:1161px;height:20px;background:#ff6c3c;"></div>
<div style="left:13px;top:398px;width:14px;height:19px;background:#c44b2c;border:1px solid #8e2f18;box-shadow:inset 1px 1px 0 #ff6c3c;"></div>
<div style="left:13px;top:401.53px;font-size:12px;line-height:14px;color:#fff;white-space:nowrap;letter-spacing:0.08px;width:15px;text-align:center;overflow:hidden;">T</div>
<div style="left:28px;top:398px;width:14px;height:19px;background:#c44b2c;border:1px solid #8e2f18;box-shadow:inset 1px 1px 0 #ff6c3c;"></div>
<div style="left:28px;top:401.53px;font-size:12px;line-height:14px;color:#fff;white-space:nowrap;letter-spacing:0.08px;width:15px;text-align:center;overflow:hidden;">C</div>
<div style="left:43px;top:398px;width:14px;height:19px;background:#c44b2c;border:1px solid #8e2f18;box-shadow:inset 1px 1px 0 #ff6c3c;"></div>
<div style="left:43px;top:401.53px;font-size:12px;line-height:14px;color:#fff;white-space:nowrap;letter-spacing:0.08px;width:15px;text-align:center;overflow:hidden;">X</div>
<div style="left:58px;top:398px;width:14px;height:19px;background:#c44b2c;border:1px solid #8e2f18;box-shadow:inset 1px 1px 0 #ff6c3c;"></div>
<div style="left:58px;top:401.53px;font-size:12px;line-height:14px;color:#fff;white-space:nowrap;letter-spacing:0.08px;width:15px;text-align:center;overflow:hidden;">M</div>
<div style="left:73px;top:398px;width:14px;height:19px;background:#c44b2c;border:1px solid #8e2f18;box-shadow:inset 1px 1px 0 #ff6c3c;"></div>
<div style="left:73px;top:401.53px;font-size:12px;line-height:14px;color:#fff;white-space:nowrap;letter-spacing:0.08px;width:15px;text-align:center;overflow:hidden;">S</div>
<div style="left:88px;top:398px;width:19px;height:19px;background:#c44b2c;border:1px solid #8e2f18;box-shadow:inset 1px 1px 0 #ff6c3c;"></div>
<div style="left:88px;top:401.53px;font-size:12px;line-height:14px;color:#fff;white-space:nowrap;letter-spacing:0.08px;width:20px;text-align:center;overflow:hidden;">I.C</div>
<div style="left:108px;top:398px;width:19px;height:19px;background:#c44b2c;border:1px solid #8e2f18;box-shadow:inset 1px 1px 0 #ff6c3c;"></div>
<div style="left:110.6px;top:401.53px;font-size:12px;line-height:14px;color:#fff;white-space:nowrap;letter-spacing:0.3px;overflow:hidden;width:16px;">I....</div>
<div style="left:128px;top:398px;width:19px;height:19px;background:#c44b2c;border:1px solid #8e2f18;box-shadow:inset 1px 1px 0 #ff6c3c;"></div>
<div style="left:128px;top:401.53px;font-size:12px;line-height:14px;color:#fff;white-space:nowrap;letter-spacing:0.08px;width:20px;text-align:center;overflow:hidden;">I.I</div>
<div style="left:148px;top:398px;width:74px;height:19px;background:#c44b2c;border:1px solid #8e2f18;box-shadow:inset 1px 1px 0 #ff6c3c;"></div>
<div style="left:148px;top:401.53px;font-size:12px;line-height:14px;color:#fff;white-space:nowrap;letter-spacing:0.08px;width:75px;text-align:center;overflow:hidden;">Status</div>
<div style="left:223px;top:398px;width:19px;height:19px;background:#c44b2c;border:1px solid #8e2f18;box-shadow:inset 1px 1px 0 #ff6c3c;"></div>
<div style="left:223px;top:401.53px;font-size:12px;line-height:14px;color:#fff;white-space:nowrap;letter-spacing:0.08px;width:20px;text-align:center;overflow:hidden;">L</div>
<div style="left:243px;top:398px;width:44px;height:19px;background:#c44b2c;border:1px solid #8e2f18;box-shadow:inset 1px 1px 0 #ff6c3c;"></div>
<div style="left:243px;top:401.53px;font-size:12px;line-height:14px;color:#fff;white-space:nowrap;letter-spacing:0.08px;width:45px;text-align:center;overflow:hidden;">Action</div>
<div style="left:288px;top:398px;width:99px;height:19px;background:#c44b2c;border:1px solid #8e2f18;box-shadow:inset 1px 1px 0 #ff6c3c;"></div>
<div style="left:288px;top:401.53px;font-size:12px;line-height:14px;color:#fff;white-space:nowrap;letter-spacing:0.08px;width:100px;text-align:center;overflow:hidden;">Product ID</div>
<div style="left:388px;top:398px;width:157px;height:19px;background:#c44b2c;border:1px solid #8e2f18;box-shadow:inset 1px 1px 0 #ff6c3c;"></div>
<div style="left:388px;top:401.53px;font-size:12px;line-height:14px;color:#fff;white-space:nowrap;letter-spacing:0.08px;width:158px;text-align:center;overflow:hidden;">Description</div>
<div style="left:546px;top:398px;width:54px;height:19px;background:#c44b2c;border:1px solid #8e2f18;box-shadow:inset 1px 1px 0 #ff6c3c;"></div>
<div style="left:546px;top:401.53px;font-size:12px;line-height:14px;color:#fff;white-space:nowrap;letter-spacing:0.08px;width:55px;text-align:center;overflow:hidden;">Duration</div>
<div style="left:601px;top:398px;width:29px;height:19px;background:#c44b2c;border:1px solid #8e2f18;box-shadow:inset 1px 1px 0 #ff6c3c;"></div>
<div style="left:601px;top:401.53px;font-size:12px;line-height:14px;color:#fff;white-space:nowrap;letter-spacing:0.08px;width:30px;text-align:center;overflow:hidden;">Qty</div>
<div style="left:631px;top:398px;width:99px;height:19px;background:#c44b2c;border:1px solid #8e2f18;box-shadow:inset 1px 1px 0 #ff6c3c;"></div>
<div style="left:631px;top:401.53px;font-size:12px;line-height:14px;color:#fff;white-space:nowrap;letter-spacing:0.08px;width:100px;text-align:center;overflow:hidden;">Shipping Site</div>
<div style="left:731px;top:398px;width:99px;height:19px;background:#c44b2c;border:1px solid #8e2f18;box-shadow:inset 1px 1px 0 #ff6c3c;"></div>
<div style="left:731px;top:401.53px;font-size:12px;line-height:14px;color:#fff;white-space:nowrap;letter-spacing:0.08px;width:100px;text-align:center;overflow:hidden;">Returning Site</div>
<div style="left:831px;top:398px;width:39px;height:19px;background:#c44b2c;border:1px solid #8e2f18;box-shadow:inset 1px 1px 0 #ff6c3c;"></div>
<div style="left:831px;top:401.53px;font-size:12px;line-height:14px;color:#fff;white-space:nowrap;letter-spacing:0.08px;width:40px;text-align:center;overflow:hidden;">Unit</div>
<div style="left:871px;top:398px;width:89px;height:19px;background:#c44b2c;border:1px solid #8e2f18;box-shadow:inset 1px 1px 0 #ff6c3c;"></div>
<div style="left:871px;top:401.53px;font-size:12px;line-height:14px;color:#fff;white-space:nowrap;letter-spacing:0.08px;width:90px;text-align:center;overflow:hidden;">Day/Each Price</div>
<div style="left:961px;top:398px;width:69px;height:19px;background:#c44b2c;border:1px solid #8e2f18;box-shadow:inset 1px 1px 0 #ff6c3c;"></div>
<div style="left:961px;top:401.53px;font-size:12px;line-height:14px;color:#fff;white-space:nowrap;letter-spacing:0.08px;width:70px;text-align:center;overflow:hidden;">Week Price</div>
<div style="left:1031px;top:398px;width:69px;height:19px;background:#c44b2c;border:1px solid #8e2f18;box-shadow:inset 1px 1px 0 #ff6c3c;"></div>
<div style="left:1031px;top:401.53px;font-size:12px;line-height:14px;color:#fff;white-space:nowrap;letter-spacing:0.08px;width:70px;text-align:center;overflow:hidden;">Month Price</div>
<div style="left:1101px;top:398px;width:54px;height:19px;background:#c44b2c;border:1px solid #8e2f18;box-shadow:inset 1px 1px 0 #ff6c3c;"></div>
<div style="left:1101px;top:401.53px;font-size:12px;line-height:14px;color:#fff;white-space:nowrap;letter-spacing:0.08px;width:55px;text-align:center;overflow:hidden;">Discount</div>
<div style="left:1156px;top:398px;width:17px;height:19px;background:#c44b2c;border:1px solid #8e2f18;box-shadow:inset 1px 1px 0 #ff6c3c;"></div>
<div style="left:1161px;top:401.53px;font-size:12px;line-height:14px;color:#fff;white-space:nowrap;letter-spacing:0.2px;overflow:hidden;width:13px;">Ne</div>
<div style="left:13px;top:418px;width:1161px;height:18px;background:#fb9b4e;"></div>
<div style="left:13px;top:436px;width:1161px;height:1px;background:#c5794b;"></div>
<div style="left:13px;top:455px;width:1161px;height:1px;background:#c5794b;"></div>
<div style="left:13px;top:474px;width:1161px;height:1px;background:#c5794b;"></div>
<div style="left:13px;top:493px;width:1161px;height:1px;background:#c5794b;"></div>
<div style="left:13px;top:512px;width:1161px;height:1px;background:#c5794b;"></div>
<div style="left:13px;top:531px;width:1161px;height:1px;background:#c5794b;"></div>
<div style="left:13px;top:550px;width:1161px;height:1px;background:#c5794b;"></div>
<div style="left:27px;top:418px;width:1px;height:133px;background:#c5794b;"></div>
<div style="left:42px;top:418px;width:1px;height:133px;background:#c5794b;"></div>
<div style="left:57px;top:418px;width:1px;height:133px;background:#c5794b;"></div>
<div style="left:72px;top:418px;width:1px;height:133px;background:#c5794b;"></div>
<div style="left:87px;top:418px;width:1px;height:133px;background:#c5794b;"></div>
<div style="left:107px;top:418px;width:1px;height:133px;background:#c5794b;"></div>
<div style="left:127px;top:418px;width:1px;height:133px;background:#c5794b;"></div>
<div style="left:147px;top:418px;width:1px;height:133px;background:#c5794b;"></div>
<div style="left:222px;top:418px;width:1px;height:133px;background:#c5794b;"></div>
<div style="left:242px;top:418px;width:1px;height:133px;background:#c5794b;"></div>
<div style="left:287px;top:418px;width:1px;height:133px;background:#c5794b;"></div>
<div style="left:387px;top:418px;width:1px;height:133px;background:#c5794b;"></div>
<div style="left:545px;top:418px;width:1px;height:133px;background:#c5794b;"></div>
<div style="left:600px;top:418px;width:1px;height:133px;background:#c5794b;"></div>
<div style="left:630px;top:418px;width:1px;height:133px;background:#c5794b;"></div>
<div style="left:730px;top:418px;width:1px;height:133px;background:#c5794b;"></div>
<div style="left:830px;top:418px;width:1px;height:133px;background:#c5794b;"></div>
<div style="left:870px;top:418px;width:1px;height:133px;background:#c5794b;"></div>
<div style="left:960px;top:418px;width:1px;height:133px;background:#c5794b;"></div>
<div style="left:1030px;top:418px;width:1px;height:133px;background:#c5794b;"></div>
<div style="left:1100px;top:418px;width:1px;height:133px;background:#c5794b;"></div>
<div style="left:1155px;top:418px;width:1px;height:133px;background:#c5794b;"></div>
<div style="left:13px;top:417px;width:1px;height:133px;background:#c5794b;opacity:0.0;"></div>
<svg style="left:14px;top:421px" width="13" height="13" viewBox="0 0 13 13"><defs><linearGradient id="g35" x1="0" y1="0" x2="1" y2="1"><stop offset="0" stop-color="#fcd0a6"/><stop offset="1" stop-color="#f18a2e"/></linearGradient></defs><rect x="1" y="1" width="10" height="10" fill="url(#g35)"/><path d="M0 12.5 L12.5 12.5 L12.5 0" fill="none" stroke="#ffffff"/><path d="M0.5 12 L0.5 0.5 L12 0.5" fill="none" stroke="#6b8299"/><path d="M1.5 11 L1.5 1.5 L11 1.5" fill="none" stroke="#ffffff" opacity="0.92"/><path d="M1 11.5 L11.5 11.5 L11.5 1" fill="none" stroke="#7f94a9"/><path d="M3.6 5.2 L4.6 9.2 L9.8 3.2" fill="none" stroke="#141414" stroke-width="2" stroke-linejoin="miter"/></svg>
<svg style="left:29px;top:421px" width="13" height="13" viewBox="0 0 13 13"><defs><linearGradient id="g36" x1="0" y1="0" x2="1" y2="1"><stop offset="0" stop-color="#fcd0a6"/><stop offset="1" stop-color="#f18a2e"/></linearGradient></defs><rect x="1" y="1" width="10" height="10" fill="url(#g36)"/><path d="M0 12.5 L12.5 12.5 L12.5 0" fill="none" stroke="#ffffff"/><path d="M0.5 12 L0.5 0.5 L12 0.5" fill="none" stroke="#6b8299"/><path d="M1.5 11 L1.5 1.5 L11 1.5" fill="none" stroke="#ffffff" opacity="0.92"/><path d="M1 11.5 L11.5 11.5 L11.5 1" fill="none" stroke="#7f94a9"/></svg>
<svg style="left:44px;top:421px" width="13" height="13" viewBox="0 0 13 13"><defs><linearGradient id="g37" x1="0" y1="0" x2="1" y2="1"><stop offset="0" stop-color="#fcd0a6"/><stop offset="1" stop-color="#f18a2e"/></linearGradient></defs><rect x="1" y="1" width="10" height="10" fill="url(#g37)"/><path d="M0 12.5 L12.5 12.5 L12.5 0" fill="none" stroke="#ffffff"/><path d="M0.5 12 L0.5 0.5 L12 0.5" fill="none" stroke="#6b8299"/><path d="M1.5 11 L1.5 1.5 L11 1.5" fill="none" stroke="#ffffff" opacity="0.92"/><path d="M1 11.5 L11.5 11.5 L11.5 1" fill="none" stroke="#7f94a9"/></svg>
<svg style="left:59px;top:421px" width="13" height="13" viewBox="0 0 13 13"><defs><linearGradient id="g38" x1="0" y1="0" x2="1" y2="1"><stop offset="0" stop-color="#fcd0a6"/><stop offset="1" stop-color="#f18a2e"/></linearGradient></defs><rect x="1" y="1" width="10" height="10" fill="url(#g38)"/><path d="M0 12.5 L12.5 12.5 L12.5 0" fill="none" stroke="#ffffff"/><path d="M0.5 12 L0.5 0.5 L12 0.5" fill="none" stroke="#6b8299"/><path d="M1.5 11 L1.5 1.5 L11 1.5" fill="none" stroke="#ffffff" opacity="0.92"/><path d="M1 11.5 L11.5 11.5 L11.5 1" fill="none" stroke="#7f94a9"/></svg>
<svg style="left:74px;top:421px" width="13" height="13" viewBox="0 0 13 13"><defs><linearGradient id="g39" x1="0" y1="0" x2="1" y2="1"><stop offset="0" stop-color="#fcd0a6"/><stop offset="1" stop-color="#f18a2e"/></linearGradient></defs><rect x="1" y="1" width="10" height="10" fill="url(#g39)"/><path d="M0 12.5 L12.5 12.5 L12.5 0" fill="none" stroke="#ffffff"/><path d="M0.5 12 L0.5 0.5 L12 0.5" fill="none" stroke="#6b8299"/><path d="M1.5 11 L1.5 1.5 L11 1.5" fill="none" stroke="#ffffff" opacity="0.92"/><path d="M1 11.5 L11.5 11.5 L11.5 1" fill="none" stroke="#7f94a9"/></svg>
<svg style="left:91px;top:421px" width="13" height="13" viewBox="0 0 13 13"><defs><linearGradient id="g40" x1="0" y1="0" x2="1" y2="1"><stop offset="0" stop-color="#fcd0a6"/><stop offset="1" stop-color="#f18a2e"/></linearGradient></defs><rect x="1" y="1" width="10" height="10" fill="url(#g40)"/><path d="M0 12.5 L12.5 12.5 L12.5 0" fill="none" stroke="#ffffff"/><path d="M0.5 12 L0.5 0.5 L12 0.5" fill="none" stroke="#6b8299"/><path d="M1.5 11 L1.5 1.5 L11 1.5" fill="none" stroke="#ffffff" opacity="0.92"/><path d="M1 11.5 L11.5 11.5 L11.5 1" fill="none" stroke="#7f94a9"/></svg>
<svg style="left:111px;top:421px" width="13" height="13" viewBox="0 0 13 13"><defs><linearGradient id="g41" x1="0" y1="0" x2="1" y2="1"><stop offset="0" stop-color="#fcd0a6"/><stop offset="1" stop-color="#f18a2e"/></linearGradient></defs><rect x="1" y="1" width="10" height="10" fill="url(#g41)"/><path d="M0 12.5 L12.5 12.5 L12.5 0" fill="none" stroke="#ffffff"/><path d="M0.5 12 L0.5 0.5 L12 0.5" fill="none" stroke="#6b8299"/><path d="M1.5 11 L1.5 1.5 L11 1.5" fill="none" stroke="#ffffff" opacity="0.92"/><path d="M1 11.5 L11.5 11.5 L11.5 1" fill="none" stroke="#7f94a9"/></svg>
<svg style="left:131px;top:421px" width="13" height="13" viewBox="0 0 13 13"><defs><linearGradient id="g42" x1="0" y1="0" x2="1" y2="1"><stop offset="0" stop-color="#fcd0a6"/><stop offset="1" stop-color="#f18a2e"/></linearGradient></defs><rect x="1" y="1" width="10" height="10" fill="url(#g42)"/><path d="M0 12.5 L12.5 12.5 L12.5 0" fill="none" stroke="#ffffff"/><path d="M0.5 12 L0.5 0.5 L12 0.5" fill="none" stroke="#6b8299"/><path d="M1.5 11 L1.5 1.5 L11 1.5" fill="none" stroke="#ffffff" opacity="0.92"/><path d="M1 11.5 L11.5 11.5 L11.5 1" fill="none" stroke="#7f94a9"/></svg>
<svg style="left:226px;top:421px" width="13" height="13" viewBox="0 0 13 13"><defs><linearGradient id="g43" x1="0" y1="0" x2="1" y2="1"><stop offset="0" stop-color="#fcd0a6"/><stop offset="1" stop-color="#f18a2e"/></linearGradient></defs><rect x="1" y="1" width="10" height="10" fill="url(#g43)"/><path d="M0 12.5 L12.5 12.5 L12.5 0" fill="none" stroke="#ffffff"/><path d="M0.5 12 L0.5 0.5 L12 0.5" fill="none" stroke="#6b8299"/><path d="M1.5 11 L1.5 1.5 L11 1.5" fill="none" stroke="#ffffff" opacity="0.92"/><path d="M1 11.5 L11.5 11.5 L11.5 1" fill="none" stroke="#7f94a9"/></svg>
<div style="left:149px;top:420.53px;font-size:12px;line-height:14px;color:#111;white-space:nowrap;letter-spacing:0.2px;">Reserved</div>
<div style="left:244px;top:420.53px;font-size:12px;line-height:14px;color:#111;white-space:nowrap;letter-spacing:0.2px;">Rent</div>
<div style="left:289px;top:420.53px;font-size:12px;line-height:14px;color:#111;white-space:nowrap;">LG NON-SERIA...</div>
<div style="left:388px;top:418px;width:157px;height:18px;border:1px solid #e8281c;"></div>
<div style="left:396px;top:420.53px;font-size:12px;line-height:14px;color:#111;white-space:nowrap;font-weight:bold;letter-spacing:-0.371px;">-&nbsp;&nbsp;LG NON-SERIAL KIT-2</div>
<div style="left:547.5px;top:420.53px;font-size:12px;line-height:14px;color:#111;white-space:nowrap;letter-spacing:0.2px;">5d</div>
<div style="left:601px;top:420.53px;font-size:12px;line-height:14px;color:#111;white-space:nowrap;letter-spacing:0.2px;width:28.5px;text-align:right;">4</div>
<div style="left:832.5px;top:420.53px;font-size:12px;line-height:14px;color:#111;white-space:nowrap;letter-spacing:0.2px;">Day</div>
<div style="left:919px;top:420.53px;font-size:12px;line-height:14px;color:#111;white-space:nowrap;letter-spacing:0.2px;width:40px;text-align:right;">0.00</div>
<div style="left:989px;top:420.53px;font-size:12px;line-height:14px;color:#111;white-space:nowrap;letter-spacing:0.2px;width:40px;text-align:right;">0.00</div>
<div style="left:1059px;top:420.53px;font-size:12px;line-height:14px;color:#111;white-space:nowrap;letter-spacing:0.2px;width:40px;text-align:right;">0.00</div>
<div style="left:1114px;top:420.53px;font-size:12px;line-height:14px;color:#111;white-space:nowrap;letter-spacing:0.2px;width:40px;text-align:right;">0.00</div>
<svg style="left:14px;top:440px" width="13" height="13" viewBox="0 0 13 13"><defs><linearGradient id="g44" x1="0" y1="0" x2="1" y2="1"><stop offset="0.12" stop-color="#ffffff"/><stop offset="1" stop-color="#f7a45c"/></linearGradient></defs><rect x="1" y="1" width="10" height="10" fill="url(#g44)"/><path d="M0 12.5 L12.5 12.5 L12.5 0" fill="none" stroke="#ffffff"/><path d="M0.5 12 L0.5 0.5 L12 0.5" fill="none" stroke="#6b8299"/><path d="M1.5 11 L1.5 1.5 L11 1.5" fill="none" stroke="#ffffff" opacity="0.92"/><path d="M1 11.5 L11.5 11.5 L11.5 1" fill="none" stroke="#7f94a9"/><path d="M3.6 5.2 L4.6 9.2 L9.8 3.2" fill="none" stroke="#141414" stroke-width="2" stroke-linejoin="miter"/></svg>
<svg style="left:29px;top:440px" width="13" height="13" viewBox="0 0 13 13"><defs><linearGradient id="g45" x1="0" y1="0" x2="1" y2="1"><stop offset="0.12" stop-color="#ffffff"/><stop offset="1" stop-color="#f7a45c"/></linearGradient></defs><rect x="1" y="1" width="10" height="10" fill="url(#g45)"/><path d="M0 12.5 L12.5 12.5 L12.5 0" fill="none" stroke="#ffffff"/><path d="M0.5 12 L0.5 0.5 L12 0.5" fill="none" stroke="#6b8299"/><path d="M1.5 11 L1.5 1.5 L11 1.5" fill="none" stroke="#ffffff" opacity="0.92"/><path d="M1 11.5 L11.5 11.5 L11.5 1" fill="none" stroke="#7f94a9"/></svg>
<svg style="left:44px;top:440px" width="13" height="13" viewBox="0 0 13 13"><defs><linearGradient id="g46" x1="0" y1="0" x2="1" y2="1"><stop offset="0.12" stop-color="#ffffff"/><stop offset="1" stop-color="#f7a45c"/></linearGradient></defs><rect x="1" y="1" width="10" height="10" fill="url(#g46)"/><path d="M0 12.5 L12.5 12.5 L12.5 0" fill="none" stroke="#ffffff"/><path d="M0.5 12 L0.5 0.5 L12 0.5" fill="none" stroke="#6b8299"/><path d="M1.5 11 L1.5 1.5 L11 1.5" fill="none" stroke="#ffffff" opacity="0.92"/><path d="M1 11.5 L11.5 11.5 L11.5 1" fill="none" stroke="#7f94a9"/></svg>
<svg style="left:59px;top:440px" width="13" height="13" viewBox="0 0 13 13"><defs><linearGradient id="g47" x1="0" y1="0" x2="1" y2="1"><stop offset="0.12" stop-color="#ffffff"/><stop offset="1" stop-color="#f7a45c"/></linearGradient></defs><rect x="1" y="1" width="10" height="10" fill="url(#g47)"/><path d="M0 12.5 L12.5 12.5 L12.5 0" fill="none" stroke="#ffffff"/><path d="M0.5 12 L0.5 0.5 L12 0.5" fill="none" stroke="#6b8299"/><path d="M1.5 11 L1.5 1.5 L11 1.5" fill="none" stroke="#ffffff" opacity="0.92"/><path d="M1 11.5 L11.5 11.5 L11.5 1" fill="none" stroke="#7f94a9"/></svg>
<svg style="left:74px;top:440px" width="13" height="13" viewBox="0 0 13 13"><defs><linearGradient id="g48" x1="0" y1="0" x2="1" y2="1"><stop offset="0.12" stop-color="#ffffff"/><stop offset="1" stop-color="#f7a45c"/></linearGradient></defs><rect x="1" y="1" width="10" height="10" fill="url(#g48)"/><path d="M0 12.5 L12.5 12.5 L12.5 0" fill="none" stroke="#ffffff"/><path d="M0.5 12 L0.5 0.5 L12 0.5" fill="none" stroke="#6b8299"/><path d="M1.5 11 L1.5 1.5 L11 1.5" fill="none" stroke="#ffffff" opacity="0.92"/><path d="M1 11.5 L11.5 11.5 L11.5 1" fill="none" stroke="#7f94a9"/></svg>
<svg style="left:91px;top:440px" width="13" height="13" viewBox="0 0 13 13"><defs><linearGradient id="g49" x1="0" y1="0" x2="1" y2="1"><stop offset="0.12" stop-color="#ffffff"/><stop offset="1" stop-color="#f7a45c"/></linearGradient></defs><rect x="1" y="1" width="10" height="10" fill="url(#g49)"/><path d="M0 12.5 L12.5 12.5 L12.5 0" fill="none" stroke="#ffffff"/><path d="M0.5 12 L0.5 0.5 L12 0.5" fill="none" stroke="#6b8299"/><path d="M1.5 11 L1.5 1.5 L11 1.5" fill="none" stroke="#ffffff" opacity="0.92"/><path d="M1 11.5 L11.5 11.5 L11.5 1" fill="none" stroke="#7f94a9"/></svg>
<svg style="left:111px;top:440px" width="13" height="13" viewBox="0 0 13 13"><defs><linearGradient id="g50" x1="0" y1="0" x2="1" y2="1"><stop offset="0.12" stop-color="#ffffff"/><stop offset="1" stop-color="#f7a45c"/></linearGradient></defs><rect x="1" y="1" width="10" height="10" fill="url(#g50)"/><path d="M0 12.5 L12.5 12.5 L12.5 0" fill="none" stroke="#ffffff"/><path d="M0.5 12 L0.5 0.5 L12 0.5" fill="none" stroke="#6b8299"/><path d="M1.5 11 L1.5 1.5 L11 1.5" fill="none" stroke="#ffffff" opacity="0.92"/><path d="M1 11.5 L11.5 11.5 L11.5 1" fill="none" stroke="#7f94a9"/></svg>
<svg style="left:131px;top:440px" width="13" height="13" viewBox="0 0 13 13"><defs><linearGradient id="g51" x1="0" y1="0" x2="1" y2="1"><stop offset="0.12" stop-color="#ffffff"/><stop offset="1" stop-color="#f7a45c"/></linearGradient></defs><rect x="1" y="1" width="10" height="10" fill="url(#g51)"/><path d="M0 12.5 L12.5 12.5 L12.5 0" fill="none" stroke="#ffffff"/><path d="M0.5 12 L0.5 0.5 L12 0.5" fill="none" stroke="#6b8299"/><path d="M1.5 11 L1.5 1.5 L11 1.5" fill="none" stroke="#ffffff" opacity="0.92"/><path d="M1 11.5 L11.5 11.5 L11.5 1" fill="none" stroke="#7f94a9"/></svg>
<svg style="left:226px;top:440px" width="13" height="13" viewBox="0 0 13 13"><defs><linearGradient id="g52" x1="0" y1="0" x2="1" y2="1"><stop offset="0.12" stop-color="#ffffff"/><stop offset="1" stop-color="#f7a45c"/></linearGradient></defs><rect x="1" y="1" width="10" height="10" fill="url(#g52)"/><path d="M0 12.5 L12.5 12.5 L12.5 0" fill="none" stroke="#ffffff"/><path d="M0.5 12 L0.5 0.5 L12 0.5" fill="none" stroke="#6b8299"/><path d="M1.5 11 L1.5 1.5 L11 1.5" fill="none" stroke="#ffffff" opacity="0.92"/><path d="M1 11.5 L11.5 11.5 L11.5 1" fill="none" stroke="#7f94a9"/></svg>
<div style="left:149px;top:439.53px;font-size:12px;line-height:14px;color:#111;white-space:nowrap;letter-spacing:0.2px;">Reserved</div>
<div style="left:244px;top:439.53px;font-size:12px;line-height:14px;color:#111;white-space:nowrap;letter-spacing:0.2px;">Rent</div>
<div style="left:289px;top:439.53px;font-size:12px;line-height:14px;color:#111;white-space:nowrap;">LG STAR-NS</div>
<div style="left:401.5px;top:439.53px;font-size:12px;line-height:14px;color:#111;white-space:nowrap;font-style:italic;">LG STAR-NS</div>
<div style="left:601px;top:439.53px;font-size:12px;line-height:14px;color:#111;white-space:nowrap;letter-spacing:0.2px;width:28.5px;text-align:right;">2</div>
<div style="left:632.2px;top:439.53px;font-size:12px;line-height:14px;color:#111;white-space:nowrap;">BUDAPEST</div>
<div style="left:732px;top:439.53px;font-size:12px;line-height:14px;color:#111;white-space:nowrap;">PARIS</div>
<svg style="left:14px;top:459px" width="13" height="13" viewBox="0 0 13 13"><defs><linearGradient id="g53" x1="0" y1="0" x2="1" y2="1"><stop offset="0.12" stop-color="#ffffff"/><stop offset="1" stop-color="#f7a45c"/></linearGradient></defs><rect x="1" y="1" width="10" height="10" fill="url(#g53)"/><path d="M0 12.5 L12.5 12.5 L12.5 0" fill="none" stroke="#ffffff"/><path d="M0.5 12 L0.5 0.5 L12 0.5" fill="none" stroke="#6b8299"/><path d="M1.5 11 L1.5 1.5 L11 1.5" fill="none" stroke="#ffffff" opacity="0.92"/><path d="M1 11.5 L11.5 11.5 L11.5 1" fill="none" stroke="#7f94a9"/><path d="M3.6 5.2 L4.6 9.2 L9.8 3.2" fill="none" stroke="#141414" stroke-width="2" stroke-linejoin="miter"/></svg>
<svg style="left:29px;top:459px" width="13" height="13" viewBox="0 0 13 13"><defs><linearGradient id="g54" x1="0" y1="0" x2="1" y2="1"><stop offset="0.12" stop-color="#ffffff"/><stop offset="1" stop-color="#f7a45c"/></linearGradient></defs><rect x="1" y="1" width="10" height="10" fill="url(#g54)"/><path d="M0 12.5 L12.5 12.5 L12.5 0" fill="none" stroke="#ffffff"/><path d="M0.5 12 L0.5 0.5 L12 0.5" fill="none" stroke="#6b8299"/><path d="M1.5 11 L1.5 1.5 L11 1.5" fill="none" stroke="#ffffff" opacity="0.92"/><path d="M1 11.5 L11.5 11.5 L11.5 1" fill="none" stroke="#7f94a9"/></svg>
<svg style="left:44px;top:459px" width="13" height="13" viewBox="0 0 13 13"><defs><linearGradient id="g55" x1="0" y1="0" x2="1" y2="1"><stop offset="0.12" stop-color="#ffffff"/><stop offset="1" stop-color="#f7a45c"/></linearGradient></defs><rect x="1" y="1" width="10" height="10" fill="url(#g55)"/><path d="M0 12.5 L12.5 12.5 L12.5 0" fill="none" stroke="#ffffff"/><path d="M0.5 12 L0.5 0.5 L12 0.5" fill="none" stroke="#6b8299"/><path d="M1.5 11 L1.5 1.5 L11 1.5" fill="none" stroke="#ffffff" opacity="0.92"/><path d="M1 11.5 L11.5 11.5 L11.5 1" fill="none" stroke="#7f94a9"/></svg>
<svg style="left:59px;top:459px" width="13" height="13" viewBox="0 0 13 13"><defs><linearGradient id="g56" x1="0" y1="0" x2="1" y2="1"><stop offset="0.12" stop-color="#ffffff"/><stop offset="1" stop-color="#f7a45c"/></linearGradient></defs><rect x="1" y="1" width="10" height="10" fill="url(#g56)"/><path d="M0 12.5 L12.5 12.5 L12.5 0" fill="none" stroke="#ffffff"/><path d="M0.5 12 L0.5 0.5 L12 0.5" fill="none" stroke="#6b8299"/><path d="M1.5 11 L1.5 1.5 L11 1.5" fill="none" stroke="#ffffff" opacity="0.92"/><path d="M1 11.5 L11.5 11.5 L11.5 1" fill="none" stroke="#7f94a9"/></svg>
<svg style="left:74px;top:459px" width="13" height="13" viewBox="0 0 13 13"><defs><linearGradient id="g57" x1="0" y1="0" x2="1" y2="1"><stop offset="0.12" stop-color="#ffffff"/><stop offset="1" stop-color="#f7a45c"/></linearGradient></defs><rect x="1" y="1" width="10" height="10" fill="url(#g57)"/><path d="M0 12.5 L12.5 12.5 L12.5 0" fill="none" stroke="#ffffff"/><path d="M0.5 12 L0.5 0.5 L12 0.5" fill="none" stroke="#6b8299"/><path d="M1.5 11 L1.5 1.5 L11 1.5" fill="none" stroke="#ffffff" opacity="0.92"/><path d="M1 11.5 L11.5 11.5 L11.5 1" fill="none" stroke="#7f94a9"/></svg>
<svg style="left:91px;top:459px" width="13" height="13" viewBox="0 0 13 13"><defs><linearGradient id="g58" x1="0" y1="0" x2="1" y2="1"><stop offset="0.12" stop-color="#ffffff"/><stop offset="1" stop-color="#f7a45c"/></linearGradient></defs><rect x="1" y="1" width="10" height="10" fill="url(#g58)"/><path d="M0 12.5 L12.5 12.5 L12.5 0" fill="none" stroke="#ffffff"/><path d="M0.5 12 L0.5 0.5 L12 0.5" fill="none" stroke="#6b8299"/><path d="M1.5 11 L1.5 1.5 L11 1.5" fill="none" stroke="#ffffff" opacity="0.92"/><path d="M1 11.5 L11.5 11.5 L11.5 1" fill="none" stroke="#7f94a9"/></svg>
<svg style="left:111px;top:459px" width="13" height="13" viewBox="0 0 13 13"><defs><linearGradient id="g59" x1="0" y1="0" x2="1" y2="1"><stop offset="0.12" stop-color="#ffffff"/><stop offset="1" stop-color="#f7a45c"/></linearGradient></defs><rect x="1" y="1" width="10" height="10" fill="url(#g59)"/><path d="M0 12.5 L12.5 12.5 L12.5 0" fill="none" stroke="#ffffff"/><path d="M0.5 12 L0.5 0.5 L12 0.5" fill="none" stroke="#6b8299"/><path d="M1.5 11 L1.5 1.5 L11 1.5" fill="none" stroke="#ffffff" opacity="0.92"/><path d="M1 11.5 L11.5 11.5 L11.5 1" fill="none" stroke="#7f94a9"/></svg>
<svg style="left:131px;top:459px" width="13" height="13" viewBox="0 0 13 13"><defs><linearGradient id="g60" x1="0" y1="0" x2="1" y2="1"><stop offset="0.12" stop-color="#ffffff"/><stop offset="1" stop-color="#f7a45c"/></linearGradient></defs><rect x="1" y="1" width="10" height="10" fill="url(#g60)"/><path d="M0 12.5 L12.5 12.5 L12.5 0" fill="none" stroke="#ffffff"/><path d="M0.5 12 L0.5 0.5 L12 0.5" fill="none" stroke="#6b8299"/><path d="M1.5 11 L1.5 1.5 L11 1.5" fill="none" stroke="#ffffff" opacity="0.92"/><path d="M1 11.5 L11.5 11.5 L11.5 1" fill="none" stroke="#7f94a9"/></svg>
<svg style="left:226px;top:459px" width="13" height="13" viewBox="0 0 13 13"><defs><linearGradient id="g61" x1="0" y1="0" x2="1" y2="1"><stop offset="0.12" stop-color="#ffffff"/><stop offset="1" stop-color="#f7a45c"/></linearGradient></defs><rect x="1" y="1" width="10" height="10" fill="url(#g61)"/><path d="M0 12.5 L12.5 12.5 L12.5 0" fill="none" stroke="#ffffff"/><path d="M0.5 12 L0.5 0.5 L12 0.5" fill="none" stroke="#6b8299"/><path d="M1.5 11 L1.5 1.5 L11 1.5" fill="none" stroke="#ffffff" opacity="0.92"/><path d="M1 11.5 L11.5 11.5 L11.5 1" fill="none" stroke="#7f94a9"/></svg>
<div style="left:149px;top:458.53px;font-size:12px;line-height:14px;color:#111;white-space:nowrap;letter-spacing:0.2px;">Reserved</div>
<div style="left:244px;top:458.53px;font-size:12px;line-height:14px;color:#111;white-space:nowrap;letter-spacing:0.2px;">Rent</div>
<div style="left:289px;top:458.53px;font-size:12px;line-height:14px;color:#111;white-space:nowrap;">LG STAR-NS</div>
<div style="left:401.5px;top:458.53px;font-size:12px;line-height:14px;color:#111;white-space:nowrap;font-style:italic;">LG STAR-NS</div>
<div style="left:601px;top:458.53px;font-size:12px;line-height:14px;color:#111;white-space:nowrap;letter-spacing:0.2px;width:28.5px;text-align:right;">1</div>
<div style="left:632.2px;top:458.53px;font-size:12px;line-height:14px;color:#111;white-space:nowrap;">BERLIN</div>
<div style="left:732px;top:458.53px;font-size:12px;line-height:14px;color:#111;white-space:nowrap;">PARIS</div>
<svg style="left:14px;top:478px" width="13" height="13" viewBox="0 0 13 13"><defs><linearGradient id="g62" x1="0" y1="0" x2="1" y2="1"><stop offset="0.12" stop-color="#ffffff"/><stop offset="1" stop-color="#f7a45c"/></linearGradient></defs><rect x="1" y="1" width="10" height="10" fill="url(#g62)"/><path d="M0 12.5 L12.5 12.5 L12.5 0" fill="none" stroke="#ffffff"/><path d="M0.5 12 L0.5 0.5 L12 0.5" fill="none" stroke="#6b8299"/><path d="M1.5 11 L1.5 1.5 L11 1.5" fill="none" stroke="#ffffff" opacity="0.92"/><path d="M1 11.5 L11.5 11.5 L11.5 1" fill="none" stroke="#7f94a9"/><path d="M3.6 5.2 L4.6 9.2 L9.8 3.2" fill="none" stroke="#141414" stroke-width="2" stroke-linejoin="miter"/></svg>
<svg style="left:29px;top:478px" width="13" height="13" viewBox="0 0 13 13"><defs><linearGradient id="g63" x1="0" y1="0" x2="1" y2="1"><stop offset="0.12" stop-color="#ffffff"/><stop offset="1" stop-color="#f7a45c"/></linearGradient></defs><rect x="1" y="1" width="10" height="10" fill="url(#g63)"/><path d="M0 12.5 L12.5 12.5 L12.5 0" fill="none" stroke="#ffffff"/><path d="M0.5 12 L0.5 0.5 L12 0.5" fill="none" stroke="#6b8299"/><path d="M1.5 11 L1.5 1.5 L11 1.5" fill="none" stroke="#ffffff" opacity="0.92"/><path d="M1 11.5 L11.5 11.5 L11.5 1" fill="none" stroke="#7f94a9"/></svg>
<svg style="left:44px;top:478px" width="13" height="13" viewBox="0 0 13 13"><defs><linearGradient id="g64" x1="0" y1="0" x2="1" y2="1"><stop offset="0.12" stop-color="#ffffff"/><stop offset="1" stop-color="#f7a45c"/></linearGradient></defs><rect x="1" y="1" width="10" height="10" fill="url(#g64)"/><path d="M0 12.5 L12.5 12.5 L12.5 0" fill="none" stroke="#ffffff"/><path d="M0.5 12 L0.5 0.5 L12 0.5" fill="none" stroke="#6b8299"/><path d="M1.5 11 L1.5 1.5 L11 1.5" fill="none" stroke="#ffffff" opacity="0.92"/><path d="M1 11.5 L11.5 11.5 L11.5 1" fill="none" stroke="#7f94a9"/></svg>
<svg style="left:59px;top:478px" width="13" height="13" viewBox="0 0 13 13"><defs><linearGradient id="g65" x1="0" y1="0" x2="1" y2="1"><stop offset="0.12" stop-color="#ffffff"/><stop offset="1" stop-color="#f7a45c"/></linearGradient></defs><rect x="1" y="1" width="10" height="10" fill="url(#g65)"/><path d="M0 12.5 L12.5 12.5 L12.5 0" fill="none" stroke="#ffffff"/><path d="M0.5 12 L0.5 0.5 L12 0.5" fill="none" stroke="#6b8299"/><path d="M1.5 11 L1.5 1.5 L11 1.5" fill="none" stroke="#ffffff" opacity="0.92"/><path d="M1 11.5 L11.5 11.5 L11.5 1" fill="none" stroke="#7f94a9"/></svg>
<svg style="left:74px;top:478px" width="13" height="13" viewBox="0 0 13 13"><defs><linearGradient id="g66" x1="0" y1="0" x2="1" y2="1"><stop offset="0.12" stop-color="#ffffff"/><stop offset="1" stop-color="#f7a45c"/></linearGradient></defs><rect x="1" y="1" width="10" height="10" fill="url(#g66)"/><path d="M0 12.5 L12.5 12.5 L12.5 0" fill="none" stroke="#ffffff"/><path d="M0.5 12 L0.5 0.5 L12 0.5" fill="none" stroke="#6b8299"/><path d="M1.5 11 L1.5 1.5 L11 1.5" fill="none" stroke="#ffffff" opacity="0.92"/><path d="M1 11.5 L11.5 11.5 L11.5 1" fill="none" stroke="#7f94a9"/></svg>
<svg style="left:91px;top:478px" width="13" height="13" viewBox="0 0 13 13"><defs><linearGradient id="g67" x1="0" y1="0" x2="1" y2="1"><stop offset="0.12" stop-color="#ffffff"/><stop offset="1" stop-color="#f7a45c"/></linearGradient></defs><rect x="1" y="1" width="10" height="10" fill="url(#g67)"/><path d="M0 12.5 L12.5 12.5 L12.5 0" fill="none" stroke="#ffffff"/><path d="M0.5 12 L0.5 0.5 L12 0.5" fill="none" stroke="#6b8299"/><path d="M1.5 11 L1.5 1.5 L11 1.5" fill="none" stroke="#ffffff" opacity="0.92"/><path d="M1 11.5 L11.5 11.5 L11.5 1" fill="none" stroke="#7f94a9"/></svg>
<svg style="left:111px;top:478px" width="13" height="13" viewBox="0 0 13 13"><defs><linearGradient id="g68" x1="0" y1="0" x2="1" y2="1"><stop offset="0.12" stop-color="#ffffff"/><stop offset="1" stop-color="#f7a45c"/></linearGradient></defs><rect x="1" y="1" width="10" height="10" fill="url(#g68)"/><path d="M0 12.5 L12.5 12.5 L12.5 0" fill="none" stroke="#ffffff"/><path d="M0.5 12 L0.5 0.5 L12 0.5" fill="none" stroke="#6b8299"/><path d="M1.5 11 L1.5 1.5 L11 1.5" fill="none" stroke="#ffffff" opacity="0.92"/><path d="M1 11.5 L11.5 11.5 L11.5 1" fill="none" stroke="#7f94a9"/></svg>
<svg style="left:131px;top:478px" width="13" height="13" viewBox="0 0 13 13"><defs><linearGradient id="g69" x1="0" y1="0" x2="1" y2="1"><stop offset="0.12" stop-color="#ffffff"/><stop offset="1" stop-color="#f7a45c"/></linearGradient></defs><rect x="1" y="1" width="10" height="10" fill="url(#g69)"/><path d="M0 12.5 L12.5 12.5 L12.5 0" fill="none" stroke="#ffffff"/><path d="M0.5 12 L0.5 0.5 L12 0.5" fill="none" stroke="#6b8299"/><path d="M1.5 11 L1.5 1.5 L11 1.5" fill="none" stroke="#ffffff" opacity="0.92"/><path d="M1 11.5 L11.5 11.5 L11.5 1" fill="none" stroke="#7f94a9"/></svg>
<svg style="left:226px;top:478px" width="13" height="13" viewBox="0 0 13 13"><defs><linearGradient id="g70" x1="0" y1="0" x2="1" y2="1"><stop offset="0.12" stop-color="#ffffff"/><stop offset="1" stop-color="#f7a45c"/></linearGradient></defs><rect x="1" y="1" width="10" height="10" fill="url(#g70)"/><path d="M0 12.5 L12.5 12.5 L12.5 0" fill="none" stroke="#ffffff"/><path d="M0.5 12 L0.5 0.5 L12 0.5" fill="none" stroke="#6b8299"/><path d="M1.5 11 L1.5 1.5 L11 1.5" fill="none" stroke="#ffffff" opacity="0.92"/><path d="M1 11.5 L11.5 11.5 L11.5 1" fill="none" stroke="#7f94a9"/></svg>
<div style="left:149px;top:477.53px;font-size:12px;line-height:14px;color:#111;white-space:nowrap;letter-spacing:0.2px;">Reserved</div>
<div style="left:244px;top:477.53px;font-size:12px;line-height:14px;color:#111;white-space:nowrap;letter-spacing:0.2px;">Rent</div>
<div style="left:289px;top:477.53px;font-size:12px;line-height:14px;color:#111;white-space:nowrap;">LG STAR-NS</div>
<div style="left:401.5px;top:477.53px;font-size:12px;line-height:14px;color:#111;white-space:nowrap;font-style:italic;">LG STAR-NS</div>
<div style="left:601px;top:477.53px;font-size:12px;line-height:14px;color:#111;white-space:nowrap;letter-spacing:0.2px;width:28.5px;text-align:right;">5</div>
<div style="left:632.2px;top:477.53px;font-size:12px;line-height:14px;color:#111;white-space:nowrap;">PARIS</div>
<div style="left:732px;top:477.53px;font-size:12px;line-height:14px;color:#111;white-space:nowrap;">PARIS</div>
<svg style="left:14px;top:497px" width="13" height="13" viewBox="0 0 13 13"><defs><linearGradient id="g71" x1="0" y1="0" x2="1" y2="1"><stop offset="0.12" stop-color="#ffffff"/><stop offset="1" stop-color="#f7a45c"/></linearGradient></defs><rect x="1" y="1" width="10" height="10" fill="url(#g71)"/><path d="M0 12.5 L12.5 12.5 L12.5 0" fill="none" stroke="#ffffff"/><path d="M0.5 12 L0.5 0.5 L12 0.5" fill="none" stroke="#6b8299"/><path d="M1.5 11 L1.5 1.5 L11 1.5" fill="none" stroke="#ffffff" opacity="0.92"/><path d="M1 11.5 L11.5 11.5 L11.5 1" fill="none" stroke="#7f94a9"/><path d="M3.6 5.2 L4.6 9.2 L9.8 3.2" fill="none" stroke="#141414" stroke-width="2" stroke-linejoin="miter"/></svg>
<svg style="left:29px;top:497px" width="13" height="13" viewBox="0 0 13 13"><defs><linearGradient id="g72" x1="0" y1="0" x2="1" y2="1"><stop offset="0.12" stop-color="#ffffff"/><stop offset="1" stop-color="#f7a45c"/></linearGradient></defs><rect x="1" y="1" width="10" height="10" fill="url(#g72)"/><path d="M0 12.5 L12.5 12.5 L12.5 0" fill="none" stroke="#ffffff"/><path d="M0.5 12 L0.5 0.5 L12 0.5" fill="none" stroke="#6b8299"/><path d="M1.5 11 L1.5 1.5 L11 1.5" fill="none" stroke="#ffffff" opacity="0.92"/><path d="M1 11.5 L11.5 11.5 L11.5 1" fill="none" stroke="#7f94a9"/></svg>
<svg style="left:44px;top:497px" width="13" height="13" viewBox="0 0 13 13"><defs><linearGradient id="g73" x1="0" y1="0" x2="1" y2="1"><stop offset="0.12" stop-color="#ffffff"/><stop offset="1" stop-color="#f7a45c"/></linearGradient></defs><rect x="1" y="1" width="10" height="10" fill="url(#g73)"/><path d="M0 12.5 L12.5 12.5 L12.5 0" fill="none" stroke="#ffffff"/><path d="M0.5 12 L0.5 0.5 L12 0.5" fill="none" stroke="#6b8299"/><path d="M1.5 11 L1.5 1.5 L11 1.5" fill="none" stroke="#ffffff" opacity="0.92"/><path d="M1 11.5 L11.5 11.5 L11.5 1" fill="none" stroke="#7f94a9"/></svg>
<svg style="left:59px;top:497px" width="13" height="13" viewBox="0 0 13 13"><defs><linearGradient id="g74" x1="0" y1="0" x2="1" y2="1"><stop offset="0.12" stop-color="#ffffff"/><stop offset="1" stop-color="#f7a45c"/></linearGradient></defs><rect x="1" y="1" width="10" height="10" fill="url(#g74)"/><path d="M0 12.5 L12.5 12.5 L12.5 0" fill="none" stroke="#ffffff"/><path d="M0.5 12 L0.5 0.5 L12 0.5" fill="none" stroke="#6b8299"/><path d="M1.5 11 L1.5 1.5 L11 1.5" fill="none" stroke="#ffffff" opacity="0.92"/><path d="M1 11.5 L11.5 11.5 L11.5 1" fill="none" stroke="#7f94a9"/></svg>
<svg style="left:74px;top:497px" width="13" height="13" viewBox="0 0 13 13"><defs><linearGradient id="g75" x1="0" y1="0" x2="1" y2="1"><stop offset="0.12" stop-color="#ffffff"/><stop offset="1" stop-color="#f7a45c"/></linearGradient></defs><rect x="1" y="1" width="10" height="10" fill="url(#g75)"/><path d="M0 12.5 L12.5 12.5 L12.5 0" fill="none" stroke="#ffffff"/><path d="M0.5 12 L0.5 0.5 L12 0.5" fill="none" stroke="#6b8299"/><path d="M1.5 11 L1.5 1.5 L11 1.5" fill="none" stroke="#ffffff" opacity="0.92"/><path d="M1 11.5 L11.5 11.5 L11.5 1" fill="none" stroke="#7f94a9"/></svg>
<svg style="left:91px;top:497px" width="13" height="13" viewBox="0 0 13 13"><defs><linearGradient id="g76" x1="0" y1="0" x2="1" y2="1"><stop offset="0.12" stop-color="#ffffff"/><stop offset="1" stop-color="#f7a45c"/></linearGradient></defs><rect x="1" y="1" width="10" height="10" fill="url(#g76)"/><path d="M0 12.5 L12.5 12.5 L12.5 0" fill="none" stroke="#ffffff"/><path d="M0.5 12 L0.5 0.5 L12 0.5" fill="none" stroke="#6b8299"/><path d="M1.5 11 L1.5 1.5 L11 1.5" fill="none" stroke="#ffffff" opacity="0.92"/><path d="M1 11.5 L11.5 11.5 L11.5 1" fill="none" stroke="#7f94a9"/></svg>
<svg style="left:111px;top:497px" width="13" height="13" viewBox="0 0 13 13"><defs><linearGradient id="g77" x1="0" y1="0" x2="1" y2="1"><stop offset="0.12" stop-color="#ffffff"/><stop offset="1" stop-color="#f7a45c"/></linearGradient></defs><rect x="1" y="1" width="10" height="10" fill="url(#g77)"/><path d="M0 12.5 L12.5 12.5 L12.5 0" fill="none" stroke="#ffffff"/><path d="M0.5 12 L0.5 0.5 L12 0.5" fill="none" stroke="#6b8299"/><path d="M1.5 11 L1.5 1.5 L11 1.5" fill="none" stroke="#ffffff" opacity="0.92"/><path d="M1 11.5 L11.5 11.5 L11.5 1" fill="none" stroke="#7f94a9"/></svg>
<svg style="left:131px;top:497px" width="13" height="13" viewBox="0 0 13 13"><defs><linearGradient id="g78" x1="0" y1="0" x2="1" y2="1"><stop offset="0.12" stop-color="#ffffff"/><stop offset="1" stop-color="#f7a45c"/></linearGradient></defs><rect x="1" y="1" width="10" height="10" fill="url(#g78)"/><path d="M0 12.5 L12.5 12.5 L12.5 0" fill="none" stroke="#ffffff"/><path d="M0.5 12 L0.5 0.5 L12 0.5" fill="none" stroke="#6b8299"/><path d="M1.5 11 L1.5 1.5 L11 1.5" fill="none" stroke="#ffffff" opacity="0.92"/><path d="M1 11.5 L11.5 11.5 L11.5 1" fill="none" stroke="#7f94a9"/></svg>
<svg style="left:226px;top:497px" width="13" height="13" viewBox="0 0 13 13"><defs><linearGradient id="g79" x1="0" y1="0" x2="1" y2="1"><stop offset="0.12" stop-color="#ffffff"/><stop offset="1" stop-color="#f7a45c"/></linearGradient></defs><rect x="1" y="1" width="10" height="10" fill="url(#g79)"/><path d="M0 12.5 L12.5 12.5 L12.5 0" fill="none" stroke="#ffffff"/><path d="M0.5 12 L0.5 0.5 L12 0.5" fill="none" stroke="#6b8299"/><path d="M1.5 11 L1.5 1.5 L11 1.5" fill="none" stroke="#ffffff" opacity="0.92"/><path d="M1 11.5 L11.5 11.5 L11.5 1" fill="none" stroke="#7f94a9"/></svg>
<div style="left:149px;top:496.53px;font-size:12px;line-height:14px;color:#111;white-space:nowrap;letter-spacing:0.2px;">Reserved</div>
<div style="left:244px;top:496.53px;font-size:12px;line-height:14px;color:#111;white-space:nowrap;letter-spacing:0.2px;">Rent</div>
<div style="left:289px;top:496.53px;font-size:12px;line-height:14px;color:#111;white-space:nowrap;">LG WM-NS</div>
<div style="left:401.5px;top:496.53px;font-size:12px;line-height:14px;color:#111;white-space:nowrap;font-style:italic;">LG WM-NS</div>
<div style="left:601px;top:496.53px;font-size:12px;line-height:14px;color:#111;white-space:nowrap;letter-spacing:0.2px;width:28.5px;text-align:right;">2</div>
<div style="left:632.2px;top:496.53px;font-size:12px;line-height:14px;color:#111;white-space:nowrap;">BUDAPEST</div>
<div style="left:732px;top:496.53px;font-size:12px;line-height:14px;color:#111;white-space:nowrap;">PARIS</div>
<svg style="left:14px;top:516px" width="13" height="13" viewBox="0 0 13 13"><defs><linearGradient id="g80" x1="0" y1="0" x2="1" y2="1"><stop offset="0.12" stop-color="#ffffff"/><stop offset="1" stop-color="#f7a45c"/></linearGradient></defs><rect x="1" y="1" width="10" height="10" fill="url(#g80)"/><path d="M0 12.5 L12.5 12.5 L12.5 0" fill="none" stroke="#ffffff"/><path d="M0.5 12 L0.5 0.5 L12 0.5" fill="none" stroke="#6b8299"/><path d="M1.5 11 L1.5 1.5 L11 1.5" fill="none" stroke="#ffffff" opacity="0.92"/><path d="M1 11.5 L11.5 11.5 L11.5 1" fill="none" stroke="#7f94a9"/><path d="M3.6 5.2 L4.6 9.2 L9.8 3.2" fill="none" stroke="#141414" stroke-width="2" stroke-linejoin="miter"/></svg>
<svg style="left:29px;top:516px" width="13" height="13" viewBox="0 0 13 13"><defs><linearGradient id="g81" x1="0" y1="0" x2="1" y2="1"><stop offset="0.12" stop-color="#ffffff"/><stop offset="1" stop-color="#f7a45c"/></linearGradient></defs><rect x="1" y="1" width="10" height="10" fill="url(#g81)"/><path d="M0 12.5 L12.5 12.5 L12.5 0" fill="none" stroke="#ffffff"/><path d="M0.5 12 L0.5 0.5 L12 0.5" fill="none" stroke="#6b8299"/><path d="M1.5 11 L1.5 1.5 L11 1.5" fill="none" stroke="#ffffff" opacity="0.92"/><path d="M1 11.5 L11.5 11.5 L11.5 1" fill="none" stroke="#7f94a9"/></svg>
<svg style="left:44px;top:516px" width="13" height="13" viewBox="0 0 13 13"><defs><linearGradient id="g82" x1="0" y1="0" x2="1" y2="1"><stop offset="0.12" stop-color="#ffffff"/><stop offset="1" stop-color="#f7a45c"/></linearGradient></defs><rect x="1" y="1" width="10" height="10" fill="url(#g82)"/><path d="M0 12.5 L12.5 12.5 L12.5 0" fill="none" stroke="#ffffff"/><path d="M0.5 12 L0.5 0.5 L12 0.5" fill="none" stroke="#6b8299"/><path d="M1.5 11 L1.5 1.5 L11 1.5" fill="none" stroke="#ffffff" opacity="0.92"/><path d="M1 11.5 L11.5 11.5 L11.5 1" fill="none" stroke="#7f94a9"/></svg>
<svg style="left:59px;top:516px" width="13" height="13" viewBox="0 0 13 13"><defs><linearGradient id="g83" x1="0" y1="0" x2="1" y2="1"><stop offset="0.12" stop-color="#ffffff"/><stop offset="1" stop-color="#f7a45c"/></linearGradient></defs><rect x="1" y="1" width="10" height="10" fill="url(#g83)"/><path d="M0 12.5 L12.5 12.5 L12.5 0" fill="none" stroke="#ffffff"/><path d="M0.5 12 L0.5 0.5 L12 0.5" fill="none" stroke="#6b8299"/><path d="M1.5 11 L1.5 1.5 L11 1.5" fill="none" stroke="#ffffff" opacity="0.92"/><path d="M1 11.5 L11.5 11.5 L11.5 1" fill="none" stroke="#7f94a9"/></svg>
<svg style="left:74px;top:516px" width="13" height="13" viewBox="0 0 13 13"><defs><linearGradient id="g84" x1="0" y1="0" x2="1" y2="1"><stop offset="0.12" stop-color="#ffffff"/><stop offset="1" stop-color="#f7a45c"/></linearGradient></defs><rect x="1" y="1" width="10" height="10" fill="url(#g84)"/><path d="M0 12.5 L12.5 12.5 L12.5 0" fill="none" stroke="#ffffff"/><path d="M0.5 12 L0.5 0.5 L12 0.5" fill="none" stroke="#6b8299"/><path d="M1.5 11 L1.5 1.5 L11 1.5" fill="none" stroke="#ffffff" opacity="0.92"/><path d="M1 11.5 L11.5 11.5 L11.5 1" fill="none" stroke="#7f94a9"/></svg>
<svg style="left:91px;top:516px" width="13" height="13" viewBox="0 0 13 13"><defs><linearGradient id="g85" x1="0" y1="0" x2="1" y2="1"><stop offset="0.12" stop-color="#ffffff"/><stop offset="1" stop-color="#f7a45c"/></linearGradient></defs><rect x="1" y="1" width="10" height="10" fill="url(#g85)"/><path d="M0 12.5 L12.5 12.5 L12.5 0" fill="none" stroke="#ffffff"/><path d="M0.5 12 L0.5 0.5 L12 0.5" fill="none" stroke="#6b8299"/><path d="M1.5 11 L1.5 1.5 L11 1.5" fill="none" stroke="#ffffff" opacity="0.92"/><path d="M1 11.5 L11.5 11.5 L11.5 1" fill="none" stroke="#7f94a9"/></svg>
<svg style="left:111px;top:516px" width="13" height="13" viewBox="0 0 13 13"><defs><linearGradient id="g86" x1="0" y1="0" x2="1" y2="1"><stop offset="0.12" stop-color="#ffffff"/><stop offset="1" stop-color="#f7a45c"/></linearGradient></defs><rect x="1" y="1" width="10" height="10" fill="url(#g86)"/><path d="M0 12.5 L12.5 12.5 L12.5 0" fill="none" stroke="#ffffff"/><path d="M0.5 12 L0.5 0.5 L12 0.5" fill="none" stroke="#6b8299"/><path d="M1.5 11 L1.5 1.5 L11 1.5" fill="none" stroke="#ffffff" opacity="0.92"/><path d="M1 11.5 L11.5 11.5 L11.5 1" fill="none" stroke="#7f94a9"/></svg>
<svg style="left:131px;top:516px" width="13" height="13" viewBox="0 0 13 13"><defs><linearGradient id="g87" x1="0" y1="0" x2="1" y2="1"><stop offset="0.12" stop-color="#ffffff"/><stop offset="1" stop-color="#f7a45c"/></linearGradient></defs><rect x="1" y="1" width="10" height="10" fill="url(#g87)"/><path d="M0 12.5 L12.5 12.5 L12.5 0" fill="none" stroke="#ffffff"/><path d="M0.5 12 L0.5 0.5 L12 0.5" fill="none" stroke="#6b8299"/><path d="M1.5 11 L1.5 1.5 L11 1.5" fill="none" stroke="#ffffff" opacity="0.92"/><path d="M1 11.5 L11.5 11.5 L11.5 1" fill="none" stroke="#7f94a9"/></svg>
<svg style="left:226px;top:516px" width="13" height="13" viewBox="0 0 13 13"><defs><linearGradient id="g88" x1="0" y1="0" x2="1" y2="1"><stop offset="0.12" stop-color="#ffffff"/><stop offset="1" stop-color="#f7a45c"/></linearGradient></defs><rect x="1" y="1" width="10" height="10" fill="url(#g88)"/><path d="M0 12.5 L12.5 12.5 L12.5 0" fill="none" stroke="#ffffff"/><path d="M0.5 12 L0.5 0.5 L12 0.5" fill="none" stroke="#6b8299"/><path d="M1.5 11 L1.5 1.5 L11 1.5" fill="none" stroke="#ffffff" opacity="0.92"/><path d="M1 11.5 L11.5 11.5 L11.5 1" fill="none" stroke="#7f94a9"/></svg>
<div style="left:149px;top:515.53px;font-size:12px;line-height:14px;color:#111;white-space:nowrap;letter-spacing:0.2px;">Reserved</div>
<div style="left:244px;top:515.53px;font-size:12px;line-height:14px;color:#111;white-space:nowrap;letter-spacing:0.2px;">Rent</div>
<div style="left:289px;top:515.53px;font-size:12px;line-height:14px;color:#111;white-space:nowrap;">LG WM-NS</div>
<div style="left:401.5px;top:515.53px;font-size:12px;line-height:14px;color:#111;white-space:nowrap;font-style:italic;">LG WM-NS</div>
<div style="left:601px;top:515.53px;font-size:12px;line-height:14px;color:#111;white-space:nowrap;letter-spacing:0.2px;width:28.5px;text-align:right;">1</div>
<div style="left:632.2px;top:515.53px;font-size:12px;line-height:14px;color:#111;white-space:nowrap;">BERLIN</div>
<div style="left:732px;top:515.53px;font-size:12px;line-height:14px;color:#111;white-space:nowrap;">PARIS</div>
<svg style="left:14px;top:535px" width="13" height="13" viewBox="0 0 13 13"><defs><linearGradient id="g89" x1="0" y1="0" x2="1" y2="1"><stop offset="0.12" stop-color="#ffffff"/><stop offset="1" stop-color="#f7a45c"/></linearGradient></defs><rect x="1" y="1" width="10" height="10" fill="url(#g89)"/><path d="M0 12.5 L12.5 12.5 L12.5 0" fill="none" stroke="#ffffff"/><path d="M0.5 12 L0.5 0.5 L12 0.5" fill="none" stroke="#6b8299"/><path d="M1.5 11 L1.5 1.5 L11 1.5" fill="none" stroke="#ffffff" opacity="0.92"/><path d="M1 11.5 L11.5 11.5 L11.5 1" fill="none" stroke="#7f94a9"/><path d="M3.6 5.2 L4.6 9.2 L9.8 3.2" fill="none" stroke="#141414" stroke-width="2" stroke-linejoin="miter"/></svg>
<svg style="left:29px;top:535px" width="13" height="13" viewBox="0 0 13 13"><defs><linearGradient id="g90" x1="0" y1="0" x2="1" y2="1"><stop offset="0.12" stop-color="#ffffff"/><stop offset="1" stop-color="#f7a45c"/></linearGradient></defs><rect x="1" y="1" width="10" height="10" fill="url(#g90)"/><path d="M0 12.5 L12.5 12.5 L12.5 0" fill="none" stroke="#ffffff"/><path d="M0.5 12 L0.5 0.5 L12 0.5" fill="none" stroke="#6b8299"/><path d="M1.5 11 L1.5 1.5 L11 1.5" fill="none" stroke="#ffffff" opacity="0.92"/><path d="M1 11.5 L11.5 11.5 L11.5 1" fill="none" stroke="#7f94a9"/></svg>
<svg style="left:44px;top:535px" width="13" height="13" viewBox="0 0 13 13"><defs><linearGradient id="g91" x1="0" y1="0" x2="1" y2="1"><stop offset="0.12" stop-color="#ffffff"/><stop offset="1" stop-color="#f7a45c"/></linearGradient></defs><rect x="1" y="1" width="10" height="10" fill="url(#g91)"/><path d="M0 12.5 L12.5 12.5 L12.5 0" fill="none" stroke="#ffffff"/><path d="M0.5 12 L0.5 0.5 L12 0.5" fill="none" stroke="#6b8299"/><path d="M1.5 11 L1.5 1.5 L11 1.5" fill="none" stroke="#ffffff" opacity="0.92"/><path d="M1 11.5 L11.5 11.5 L11.5 1" fill="none" stroke="#7f94a9"/></svg>
<svg style="left:59px;top:535px" width="13" height="13" viewBox="0 0 13 13"><defs><linearGradient id="g92" x1="0" y1="0" x2="1" y2="1"><stop offset="0.12" stop-color="#ffffff"/><stop offset="1" stop-color="#f7a45c"/></linearGradient></defs><rect x="1" y="1" width="10" height="10" fill="url(#g92)"/><path d="M0 12.5 L12.5 12.5 L12.5 0" fill="none" stroke="#ffffff"/><path d="M0.5 12 L0.5 0.5 L12 0.5" fill="none" stroke="#6b8299"/><path d="M1.5 11 L1.5 1.5 L11 1.5" fill="none" stroke="#ffffff" opacity="0.92"/><path d="M1 11.5 L11.5 11.5 L11.5 1" fill="none" stroke="#7f94a9"/></svg>
<svg style="left:74px;top:535px" width="13" height="13" viewBox="0 0 13 13"><defs><linearGradient id="g93" x1="0" y1="0" x2="1" y2="1"><stop offset="0.12" stop-color="#ffffff"/><stop offset="1" stop-color="#f7a45c"/></linearGradient></defs><rect x="1" y="1" width="10" height="10" fill="url(#g93)"/><path d="M0 12.5 L12.5 12.5 L12.5 0" fill="none" stroke="#ffffff"/><path d="M0.5 12 L0.5 0.5 L12 0.5" fill="none" stroke="#6b8299"/><path d="M1.5 11 L1.5 1.5 L11 1.5" fill="none" stroke="#ffffff" opacity="0.92"/><path d="M1 11.5 L11.5 11.5 L11.5 1" fill="none" stroke="#7f94a9"/></svg>
<svg style="left:91px;top:535px" width="13" height="13" viewBox="0 0 13 13"><defs><linearGradient id="g94" x1="0" y1="0" x2="1" y2="1"><stop offset="0.12" stop-color="#ffffff"/><stop offset="1" stop-color="#f7a45c"/></linearGradient></defs><rect x="1" y="1" width="10" height="10" fill="url(#g94)"/><path d="M0 12.5 L12.5 12.5 L12.5 0" fill="none" stroke="#ffffff"/><path d="M0.5 12 L0.5 0.5 L12 0.5" fill="none" stroke="#6b8299"/><path d="M1.5 11 L1.5 1.5 L11 1.5" fill="none" stroke="#ffffff" opacity="0.92"/><path d="M1 11.5 L11.5 11.5 L11.5 1" fill="none" stroke="#7f94a9"/></svg>
<svg style="left:111px;top:535px" width="13" height="13" viewBox="0 0 13 13"><defs><linearGradient id="g95" x1="0" y1="0" x2="1" y2="1"><stop offset="0.12" stop-color="#ffffff"/><stop offset="1" stop-color="#f7a45c"/></linearGradient></defs><rect x="1" y="1" width="10" height="10" fill="url(#g95)"/><path d="M0 12.5 L12.5 12.5 L12.5 0" fill="none" stroke="#ffffff"/><path d="M0.5 12 L0.5 0.5 L12 0.5" fill="none" stroke="#6b8299"/><path d="M1.5 11 L1.5 1.5 L11 1.5" fill="none" stroke="#ffffff" opacity="0.92"/><path d="M1 11.5 L11.5 11.5 L11.5 1" fill="none" stroke="#7f94a9"/></svg>
<svg style="left:131px;top:535px" width="13" height="13" viewBox="0 0 13 13"><defs><linearGradient id="g96" x1="0" y1="0" x2="1" y2="1"><stop offset="0.12" stop-color="#ffffff"/><stop offset="1" stop-color="#f7a45c"/></linearGradient></defs><rect x="1" y="1" width="10" height="10" fill="url(#g96)"/><path d="M0 12.5 L12.5 12.5 L12.5 0" fill="none" stroke="#ffffff"/><path d="M0.5 12 L0.5 0.5 L12 0.5" fill="none" stroke="#6b8299"/><path d="M1.5 11 L1.5 1.5 L11 1.5" fill="none" stroke="#ffffff" opacity="0.92"/><path d="M1 11.5 L11.5 11.5 L11.5 1" fill="none" stroke="#7f94a9"/></svg>
<svg style="left:226px;top:535px" width="13" height="13" viewBox="0 0 13 13"><defs><linearGradient id="g97" x1="0" y1="0" x2="1" y2="1"><stop offset="0.12" stop-color="#ffffff"/><stop offset="1" stop-color="#f7a45c"/></linearGradient></defs><rect x="1" y="1" width="10" height="10" fill="url(#g97)"/><path d="M0 12.5 L12.5 12.5 L12.5 0" fill="none" stroke="#ffffff"/><path d="M0.5 12 L0.5 0.5 L12 0.5" fill="none" stroke="#6b8299"/><path d="M1.5 11 L1.5 1.5 L11 1.5" fill="none" stroke="#ffffff" opacity="0.92"/><path d="M1 11.5 L11.5 11.5 L11.5 1" fill="none" stroke="#7f94a9"/></svg>
<div style="left:149px;top:534.53px;font-size:12px;line-height:14px;color:#111;white-space:nowrap;letter-spacing:0.2px;">Reserved</div>
<div style="left:244px;top:534.53px;font-size:12px;line-height:14px;color:#111;white-space:nowrap;letter-spacing:0.2px;">Rent</div>
<div style="left:289px;top:534.53px;font-size:12px;line-height:14px;color:#111;white-space:nowrap;">LG WM-NS</div>
<div style="left:401.5px;top:534.53px;font-size:12px;line-height:14px;color:#111;white-space:nowrap;font-style:italic;">LG WM-NS</div>
<div style="left:601px;top:534.53px;font-size:12px;line-height:14px;color:#111;white-space:nowrap;letter-spacing:0.2px;width:28.5px;text-align:right;">5</div>
<div style="left:632.2px;top:534.53px;font-size:12px;line-height:14px;color:#111;white-space:nowrap;">PARIS</div>
<div style="left:732px;top:534.53px;font-size:12px;line-height:14px;color:#111;white-space:nowrap;">PARIS</div>
<div style="left:13px;top:632px;width:1160px;height:16px;background:#ececec;border-top:1px solid #728ba5;border-bottom:1px solid #728ba5;box-shadow:inset 0 1px 0 #c5dbf3;"></div>
<div style="left:13px;top:648px;width:1160px;height:1px;background:#c5dbf3;"></div>
<div style="left:13px;top:632px;width:1px;height:17px;background:#728ba5;"></div>
<div style="left:14px;top:633px;width:14px;height:14px;background:#fff;"></div>
<div style="left:15px;top:634px;width:13px;height:13px;background:#ececec;"></div>
<svg style="left:18px;top:637px" width="5" height="8"><path d="M4.6 0 L4.6 8 L0.4 4 Z" fill="#2a2a2a"/></svg>
<div style="left:1156px;top:633px;width:1px;height:14px;background:#9fb0c4;"></div>
<div style="left:1157px;top:634px;width:14px;height:13px;background:#ececec;"></div>
<div style="left:1171px;top:633px;width:2px;height:15px;background:#fff;"></div>
<svg style="left:1161px;top:637px" width="5" height="8"><path d="M0.4 0 L0.4 8 L4.6 4 Z" fill="#2a2a2a"/></svg>
<div style="left:28px;top:632px;width:566px;height:16px;background:linear-gradient(90deg,rgba(255,240,225,.35),rgba(255,240,225,0) 9px),linear-gradient(#f1c4a3 0%,#ecb48e 40%,#e7a170 75%,#e8a474 100%);border:1px solid #ffc200;box-shadow:inset 0 0 0 1px #e39568;"></div>
<div style="left:594px;top:633px;width:1px;height:14px;background:#c5dbf3;"></div>
<div style="left:309px;top:637px;width:1px;height:9px;background:#8a90a8;"></div>
<div style="left:311px;top:637px;width:1px;height:9px;background:#8a90a8;"></div>
<div style="left:313px;top:637px;width:1px;height:9px;background:#8a90a8;"></div>
<div style="left:70.5px;top:662.87px;font-size:14px;line-height:16px;color:#26262e;white-space:nowrap;font-weight:bold;letter-spacing:0.355px;">Items</div>
<div style="left:120px;top:658px;width:100px;height:24px;background:#ececec;border:1px solid #858585;box-sizing:border-box;"></div>
<div style="left:235px;top:662.87px;font-size:14px;line-height:16px;color:#26262e;white-space:nowrap;font-weight:bold;letter-spacing:0.527px;">Labor</div>
<div style="left:287px;top:658px;width:100px;height:24px;background:#ececec;border:1px solid #858585;box-sizing:border-box;"></div>
<div style="left:446px;top:662.87px;font-size:14px;line-height:16px;color:#26262e;white-space:nowrap;font-weight:bold;letter-spacing:0.221px;">Sub Total</div>
<div style="left:525px;top:658px;width:100px;height:24px;background:#ececec;border:1px solid #858585;box-sizing:border-box;"></div>
<div style="left:636.5px;top:662.87px;font-size:14px;line-height:16px;color:#26262e;white-space:nowrap;font-weight:bold;letter-spacing:0.203px;">Tax</div>
<div style="left:670px;top:658px;width:100px;height:24px;background:#ececec;border:1px solid #858585;box-sizing:border-box;"></div>
<div style="left:813px;top:658px;width:89px;height:23px;border:1px solid #c4c4c4;background:#fff;"></div>
<div style="left:842.5px;top:662.87px;font-size:14px;line-height:16px;color:#26262e;white-space:nowrap;font-weight:bold;letter-spacing:0.148px;">Total</div>
<div style="left:906px;top:658px;width:100px;height:24px;background:#ececec;border:1px solid #858585;box-sizing:border-box;"></div>
<div style="left:907.5px;top:661.87px;font-size:14px;line-height:16px;color:#111;white-space:nowrap;font-weight:bold;letter-spacing:-0.15px;">0.00</div>
<div style="left:8px;top:692px;width:1171px;height:25px;background:#fff;border-top:1px solid #c6c6c6;border-left:1px solid #cdd3da;"></div>
<div style="left:9px;top:693px;width:1170px;height:23px;border:1px solid #bcbcbc;border-top-color:#7e7e7e;border-left-color:#7e7e7e;"></div>
</body></html>
